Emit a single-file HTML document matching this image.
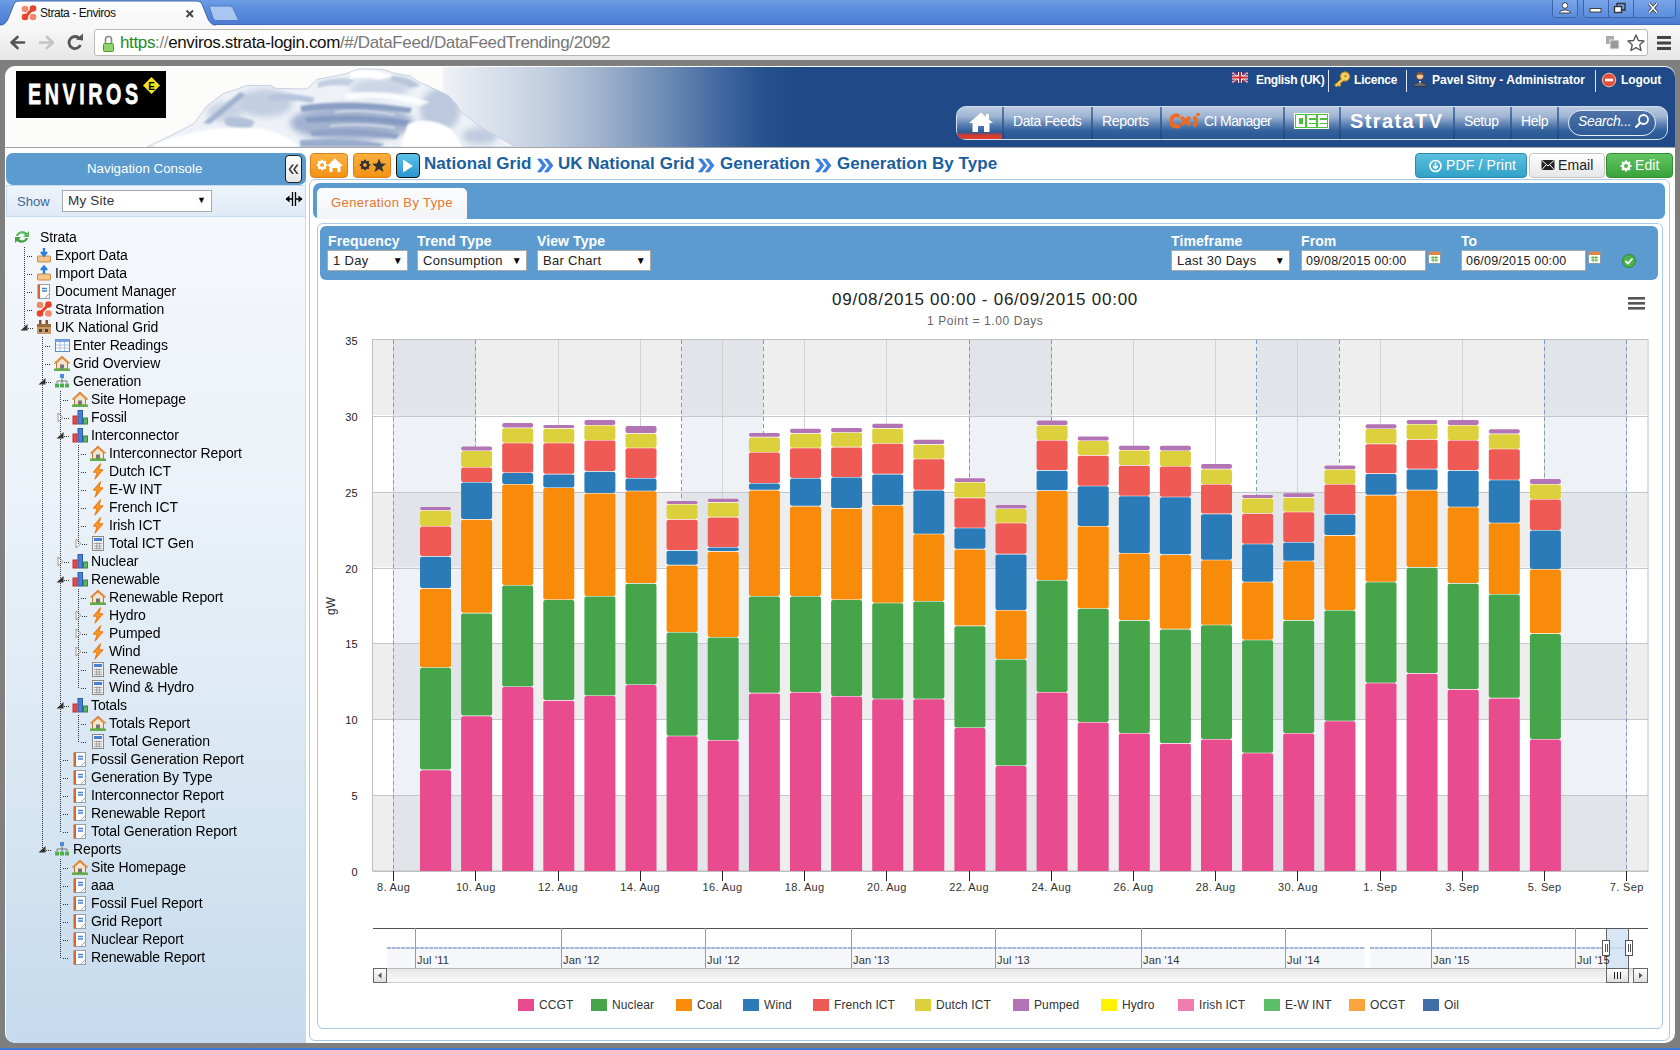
<!DOCTYPE html>
<html><head><meta charset="utf-8">
<style>
*{margin:0;padding:0;box-sizing:border-box}
html,body{width:1680px;height:1050px;overflow:hidden;background:#7f7f7f;font-family:"Liberation Sans",sans-serif;position:relative}
.a{position:absolute}
/* browser chrome */
#titlebar{left:0;top:0;width:1680px;height:25px;background:linear-gradient(#6b9ce4,#5a8bdc 50%,#4c7cd2);border-bottom:1px solid #3e6bbd}
#toolbar{left:0;top:25px;width:1680px;height:35px;background:linear-gradient(#f8f8f8,#eeeeee 60%,#e6e6e6)}
#omni{left:94px;top:29px;width:1554px;height:27px;background:#fff;border:1px solid #b9b9b9;border-radius:3px}
#url{left:120px;top:33px;font-size:17px;color:#111;white-space:nowrap;letter-spacing:-0.36px}
#page{left:5px;top:66px;width:1670px;height:977px;background:#fff;border-radius:10px}
#bluebot{left:0;top:1048px;width:1680px;height:2px;background:#3c78d8}
/* header */
#hdr{left:5px;top:67px;width:1670px;height:80px;background:linear-gradient(90deg,#fcfcfb 0px,#fcfcfb 437px,#eef1f6 439px,#dce3ed 480px,#c2cfe0 540px,#9cb0cb 600px,#6d8bb4 660px,#3f66a0 720px,#24508b 760px,#1f4a87 800px,#1f4a87 100%);border-radius:10px 10px 0 0}
#logo{left:16px;top:71px;width:150px;height:47px;background:#000}
.hl{position:absolute;top:72px;font-size:12px;font-weight:bold;color:#fff;white-space:nowrap}
.hsep{position:absolute;top:70px;width:1px;height:22px;background:#dfe7f3}
#menu{left:956px;top:106px;width:712px;height:34px;border:1px solid #d5e0ee;border-radius:10px;background:linear-gradient(#bccbe0 0%,#9eb4d2 30%,#5b80b3 55%,#31609b 75%,#2a5793 100%);overflow:hidden}
.mi{position:absolute;top:112px;height:20px;line-height:18px;font-size:14px;color:#fff;white-space:nowrap;letter-spacing:-0.4px}
.msep{position:absolute;top:107px;width:1px;height:32px;background:#3a5f93}
#hdrline{left:5px;top:147px;width:1670px;height:1px;background:#a4a4a4}
/* left nav */
#nav{left:6px;top:153px;width:300px;height:890px;background:linear-gradient(#f7f9fc 0%,#eaf1f8 40%,#d6e5f2 75%,#c5daed 100%);border-right:1px solid #cddcec;border-radius:6px 6px 0 10px}
#navh{left:6px;top:153px;width:300px;height:32px;background:#5b9bd0;border-radius:7px;color:#fff;font-size:13.3px;line-height:31px;padding-left:81px}
#navshow{left:6px;top:185px;width:300px;height:32px;background:linear-gradient(#eef4fb,#e0eaf6);border:1px solid #c7d9ee}
.t{position:absolute;font-size:14px;color:#000;white-space:nowrap;line-height:16px;letter-spacing:-0.12px}
/* main */
#main{left:309px;top:179px;width:1361px;height:862px;border:1px solid #a9cae6;border-radius:6px;background:#fff}
#tabs{left:313px;top:183px;width:1352px;height:36px;background:#5b9bcf;border-radius:7px 6px 6px 7px}
#tab{left:317px;top:188px;width:150px;height:31px;background:linear-gradient(#fbfcfd,#f2f4f7);border-radius:5px 5px 0 0}
#tabt{left:331px;top:195px;color:#e5752e;font-size:13px;letter-spacing:0.4px;white-space:nowrap}
#content{left:317px;top:223px;width:1346px;height:806px;border:1px solid #a9cae6;border-radius:6px}
#filt{left:320px;top:226px;width:1338px;height:54px;background:#5b9bcf;border-radius:6px}
.fl{position:absolute;font-size:14px;font-weight:bold;color:#fff;top:233px;white-space:nowrap;letter-spacing:0.1px}
.sel{position:absolute;top:250px;height:21px;background:#fff;border:1px solid #a9a9a9;font-size:13px;line-height:19px;padding-left:5px;color:#222;white-space:nowrap;overflow:hidden;letter-spacing:0.3px}
.sel b{position:absolute;right:4px;top:0;font-size:10px;color:#000}
.inp{position:absolute;top:250px;height:21px;background:#fff;border:1px solid #a9a9a9;font-size:12.5px;line-height:20px;padding-left:4px;color:#222;white-space:nowrap;letter-spacing:0.2px}
.btn{position:absolute;top:153px;height:25px;border-radius:3px;font-size:14px;line-height:23px;white-space:nowrap;text-align:center}
.xl{position:absolute;top:881px;width:80px;text-align:center;font-size:11px;color:#333;letter-spacing:0.35px}
.yl{position:absolute;left:322px;width:36px;text-align:right;font-size:11px;color:#222;letter-spacing:0.3px}
.lgs{position:absolute;top:999px;width:16px;height:12px}
.lgt{position:absolute;top:998px;font-size:12px;color:#333;white-space:nowrap;letter-spacing:0.1px}
.nvline{position:absolute;top:928px;width:1px;height:40px;background:#9a9a9a}
.nvl{position:absolute;top:954px;font-size:11px;color:#333;white-space:nowrap;letter-spacing:0.2px}
</style></head><body>
<div id="titlebar" class="a"></div>
<div id="toolbar" class="a"></div>
<div id="omni" class="a"></div>
<div id="url" class="a"><span style="color:#1e8b22">https</span><span style="color:#888">://</span>enviros.strata-login.com<span style="color:#777">/#/DataFeed/DataFeedTrending/2092</span></div>
<svg class="a" style="left:0;top:0" width="260" height="26">
<defs><linearGradient id="tabg" x1="0" y1="0" x2="0" y2="1"><stop offset="0" stop-color="#ffffff"/><stop offset="1" stop-color="#f6f6f6"/></linearGradient></defs>
<path d="M0,26 L0,25 C4,25 6,23 8,19 L14,4 C15,2 17,1 20,1 L196,1 C199,1 201,2 202,4 L208,19 C210,23 212,25 216,25 L260,25 L260,26 Z" fill="url(#tabg)" stroke="none"/><path d="M0,25 C4,25 6,23 8,19 L14,4 C15,2 17,1 20,1 L196,1 C199,1 201,2 202,4 L208,19 C210,23 212,25 216,25" fill="none" stroke="#3f68ad" stroke-width="1"/>
<path d="M209,6 L229,6 C231,6 232,7 233,8 L238,19 C238.5,20 238,20.5 237,20.5 L217,20.5 C215,20.5 214,20 213,18 Z" fill="#a9c6f2" stroke="#4d7bc9" stroke-width="1"/>
<g transform="translate(21,5)">
 <circle cx="4" cy="4" r="3.3" fill="#f0886a"/><circle cx="12" cy="3.5" r="3.3" fill="#e8452c"/><circle cx="4" cy="12" r="3.3" fill="#e8452c"/><circle cx="12" cy="12" r="3.3" fill="#f0886a"/>
 <path d="M4,12 L12,3.5" stroke="#e8452c" stroke-width="3"/>
</g>
<path d="M186.5,10.5 L193,17 M193,10.5 L186.5,17" stroke="#444" stroke-width="1.8"/>
</svg>
<div style="position:absolute;left:40px;top:6px;white-space:nowrap;font-size:12px;color:#111;letter-spacing:-0.45px">Strata - Enviros</div>
<svg class="a" style="left:1545px;top:0" width="135" height="20">
<defs><linearGradient id="wbg" x1="0" y1="0" x2="0" y2="1"><stop offset="0" stop-color="#7aa6ea"/><stop offset="1" stop-color="#5b8ddd"/></linearGradient></defs>
<path d="M7.5,-1 L7.5,14 C7.5,16 9,17.5 11,17.5 L29,17.5 C31,17.5 32.5,16 32.5,14 L32.5,-1" fill="url(#wbg)" stroke="#3d64a8"/>
<path d="M38.5,-1 L38.5,14 C38.5,16 40,17.5 42,17.5 L127,17.5 C129,17.5 130.5,16 130.5,14 L130.5,-1" fill="url(#wbg)" stroke="#3d64a8"/>
<line x1="63.5" y1="0" x2="63.5" y2="17" stroke="#3d64a8"/><line x1="88.5" y1="0" x2="88.5" y2="17" stroke="#3d64a8"/>
<circle cx="20" cy="5.5" r="2.8" fill="#fff" stroke="#333" stroke-width="0.9"/><path d="M14.5,13 C14.5,9 25.5,9 25.5,13 Z" fill="#fff" stroke="#333" stroke-width="0.9"/>
<rect x="45" y="8.5" width="11" height="3.5" fill="#fff" stroke="#333" stroke-width="0.9"/>
<rect x="69.5" y="6.5" width="7" height="6" fill="#fff" stroke="#333" stroke-width="1.4"/><path d="M72,6.5 V3.5 H80 V10 H76.5" fill="none" stroke="#333" stroke-width="1.4"/>
<path d="M104,3.5 L112,12.5 M112,3.5 L104,12.5" stroke="#333" stroke-width="3.2"/><path d="M104,3.5 L112,12.5 M112,3.5 L104,12.5" stroke="#fff" stroke-width="1.6"/>
</svg>
<svg class="a" style="left:0;top:24px" width="120" height="36">
<path d="M24,18.5 H13 M17.5,13 L11.5,18.5 L17.5,24" fill="none" stroke="#555" stroke-width="2.6" stroke-linecap="round" stroke-linejoin="round"/>
<path d="M40,18.5 H52 M47,13 L53,18.5 L47,24" fill="none" stroke="#c4c4c4" stroke-width="2.6" stroke-linecap="round" stroke-linejoin="round"/>
<path d="M80.5,21 A6,6 0 1 1 79.5,14.5" fill="none" stroke="#555" stroke-width="2.8"/>
<path d="M76,15.5 L83,9.5 L83,16.5 Z" fill="#555"/>
<rect x="103.5" y="19.5" width="10" height="8" fill="#8fd46b" stroke="#4d9a2e" rx="1"/>
<path d="M105.5,19.5 V15.5 A3,3 0 0 1 111.5,15.5 V19.5" fill="none" stroke="#888" stroke-width="1.6"/>
</svg>
<svg class="a" style="left:1600px;top:30px" width="80" height="26">
<rect x="6" y="6" width="8" height="8" fill="#aaa"/><rect x="10" y="10" width="9" height="9" fill="#999" stroke="#eee"/>
<path d="M36,5 L38.4,10.5 L44,11 L39.8,14.8 L41,20.5 L36,17.6 L31,20.5 L32.2,14.8 L28,11 L33.6,10.5 Z" fill="none" stroke="#555" stroke-width="1.4" stroke-linejoin="round"/>
<rect x="57" y="6" width="14" height="3" fill="#444"/><rect x="57" y="11.5" width="14" height="3" fill="#444"/><rect x="57" y="17" width="14" height="3" fill="#444"/>
</svg>

<div id="page" class="a"></div>
<div id="bluebot" class="a"></div>
<div id="hdr" class="a"></div>
<svg class="a" style="left:0;top:0" width="560" height="148">
<defs>
<filter id="bl"><feGaussianBlur stdDeviation="1.1"/></filter>
<filter id="bl2"><feGaussianBlur stdDeviation="0.6"/></filter>
<filter id="bl3"><feGaussianBlur stdDeviation="3"/></filter>
<clipPath id="mclip"><path d="M147,147 L170,136 L194,123.5 L207,105.7 L223,93.8 L240,88 L247,85.4 L270,85.4 L276,88.4 L307,89 L317,79.5 L345,74 L359,68.8 L383,69.4 L395,73.5 L410,76 L419,82 L440,91.4 L449,96 L455,103 L461,111.6 L479,126 L516,147 Z"/></clipPath>
</defs>
<path d="M147,147 L170,136 L194,123.5 L207,105.7 L223,93.8 L240,88 L247,85.4 L270,85.4 L276,88.4 L307,89 L317,79.5 L345,74 L359,68.8 L383,69.4 L395,73.5 L410,76 L419,82 L440,91.4 L449,96 L455,103 L461,111.6 L479,126 L516,147 Z" fill="#eef2f8" stroke="#c6d0e1" stroke-width="1" filter="url(#bl2)"/>
<g clip-path="url(#mclip)">
<g filter="url(#bl3)">
<ellipse cx="352" cy="123" rx="62" ry="18" fill="#a2b2cf"/>
<ellipse cx="265" cy="103" rx="28" ry="14" fill="#c3cee1"/>
<ellipse cx="440" cy="110" rx="20" ry="22" fill="#bcc8dd"/>
<ellipse cx="380" cy="88" rx="30" ry="10" fill="#ccd6e6"/>
<ellipse cx="225" cy="112" rx="18" ry="10" fill="#c9d3e4"/>
<ellipse cx="480" cy="136" rx="18" ry="9" fill="#c0cce0"/>
</g>
<g filter="url(#bl)">
<path d="M300,106 C330,101 370,102 412,108 L410,113 C370,108 330,108 302,112 Z" fill="#8a9ec3"/>
<path d="M305,118 C340,114 380,116 410,121 L406,126 C375,121 340,120 308,123 Z" fill="#8599c0"/>
<path d="M310,131 C340,128 370,129 400,134 L396,139 C370,135 340,134 312,136 Z" fill="#8fa2c6"/>
<path d="M300,140 C330,138 360,139 385,144 L380,147 L300,147 Z" fill="#9badcd"/>
<path d="M203,123 L240,92 L246,95 L210,124 Z" fill="#a2b3d0"/>
<path d="M225,118 C235,116 248,117 255,122 L250,129 C240,129 230,128 225,124 Z" fill="#b3c1d9"/>
<path d="M268,96 C280,92 300,94 315,98 L312,103 C298,100 282,100 270,101 Z" fill="#b7c4db"/>
<path d="M392,76 C405,76 415,80 420,86 L410,88 C402,84 396,82 390,81 Z" fill="#b9c6dc"/>
<path d="M318,82 C330,78 345,77 355,80 L348,86 C338,84 326,85 318,88 Z" fill="#c3cee1"/>
</g>
<g filter="url(#bl)" fill="#ffffff">
<path d="M335,112 C355,110 375,111 395,115" fill="none" stroke="#e6ebf3" stroke-width="1.5"/>
<path d="M330,126 C350,124 375,125 395,128" fill="none" stroke="#e6ebf3" stroke-width="1.5"/>
<path d="M408,124 C420,118 440,120 452,130 L462,147 L400,147 Z"/>
<path d="M150,147 C180,132 215,126 255,128 C275,130 290,138 300,147 Z" opacity="0.95"/>
<path d="M350,72 C365,69 380,70 392,76 L378,80 C368,77 358,77 350,79 Z"/>
<path d="M345,94 C370,90 400,92 430,102 L420,106 C400,99 375,97 348,99 Z" opacity="0.85"/>
</g>
</g>
</svg>
<div id="logo" class="a"></div>
<div class="a" style="left:28px;top:77px;font-size:30px;font-weight:bold;color:#fff;letter-spacing:5.5px;transform:scaleX(0.655);transform-origin:0 0;white-space:nowrap;line-height:34px;-webkit-text-stroke:0.8px #fff">ENVIROS</div>
<svg class="a" style="left:142px;top:76px" width="19" height="19"><path d="M9.5,1 L18,9.5 L9.5,18 L1,9.5 Z" fill="#f2e21c"/><text x="9.5" y="13.5" font-size="10" font-weight="bold" text-anchor="middle" font-family="Liberation Sans" fill="#000">E</text></svg>
<div id="hdrline" class="a"></div>
<svg class="a" style="left:1232px;top:72px" width="17" height="13"><rect x="0" y="0" width="16" height="11" fill="#fff"/><path d="M1,0 L6,3.5 L6,0 Z M10,0 L10,3.5 L15,0 Z M1,11 L6,7.5 L6,11 Z M10,11 L10,7.5 L15,11 Z M0,1.5 L4,3.5 L0,3.5 Z M16,1.5 L12,3.5 L16,3.5 Z M0,9.5 L4,7.5 L0,7.5 Z M16,9.5 L12,7.5 L16,7.5 Z" fill="#2b3f8e"/><path d="M0,0 L5,3.5 M16,0 L11,3.5 M0,11 L5,7.5 M16,11 L11,7.5" stroke="#d8232a" stroke-width="0.9"/><path d="M8,0 V11 M0,5.5 H16" stroke="#d8232a" stroke-width="2"/></svg>
<div style="position:absolute;left:1256px;top:73px;white-space:nowrap;font-size:12px;font-weight:bold;color:#fff;letter-spacing:-0.3px">English (UK)</div>
<div style="position:absolute;left:1328px;top:70px;width:1px;height:22px;background:#dfe7f3"></div>
<svg class="a" style="left:1333px;top:71px" width="18" height="17"><circle cx="12" cy="5.5" r="4.6" fill="#f3d060" stroke="#c08a20" stroke-width="1"/><path d="M9,7.5 L1.5,14 L3.5,16 L5,14.5 L6.5,15.5 L8,14 L7,12.5 L11.5,9" fill="#f3d060" stroke="#c08a20" stroke-width="1" stroke-linejoin="round"/><circle cx="12.5" cy="5" r="1.2" fill="#c08a20"/></svg>
<div style="position:absolute;left:1354px;top:73px;white-space:nowrap;font-size:12px;font-weight:bold;color:#fff;letter-spacing:-0.2px">Licence</div>
<div style="position:absolute;left:1406px;top:70px;width:1px;height:22px;background:#dfe7f3"></div>
<svg class="a" style="left:1412px;top:71px" width="16" height="16"><circle cx="8" cy="5" r="3.6" fill="#f3c9a0" stroke="#7a4a20" stroke-width="0.8"/><path d="M4.3,4.5 C4.5,1 11.5,1 11.7,4.5 C10,3 6,3 4.3,4.5 Z" fill="#6a3d18"/><path d="M1.5,15.5 C1.5,10 14.5,10 14.5,15.5 Z" fill="#606570" stroke="#333" stroke-width="0.8"/><path d="M7,10 L8,13 L9,10" fill="#fff"/></svg>
<div style="position:absolute;left:1432px;top:73px;white-space:nowrap;font-size:12px;font-weight:bold;color:#fff">Pavel Sitny - Administrator</div>
<div style="position:absolute;left:1595px;top:70px;width:1px;height:22px;background:#dfe7f3"></div>
<svg class="a" style="left:1601px;top:72px" width="16" height="16"><circle cx="8" cy="8" r="6.8" fill="#e4503a" stroke="#f6c8c0" stroke-width="0.9"/><rect x="4" y="6.7" width="8" height="2.6" fill="#fff"/></svg>
<div style="position:absolute;left:1621px;top:73px;white-space:nowrap;font-size:12px;font-weight:bold;color:#fff;letter-spacing:-0.1px">Logout</div>
<div id="menu" class="a"></div>
<div style="position:absolute;left:957px;top:132px;width:45px;height:7px;background:linear-gradient(#2b5a95,#d63a2c 50%,#e0412f);border-radius:0 0 0 9px"></div>
<svg class="a" style="left:968px;top:111px" width="28" height="22"><path d="M13,1.5 L25,12 L21.5,12 L21.5,21 L16,21 L16,15 L10,15 L10,21 L4.5,21 L4.5,12 L1,12 Z" fill="#fff"/><rect x="18" y="3" width="3" height="5" fill="#fff"/></svg>
<div style="position:absolute;left:1002px;top:107px;width:2px;height:32px;background:linear-gradient(#5d7fac,#1c4682)"></div>
<div style="position:absolute;left:1091px;top:107px;width:2px;height:32px;background:linear-gradient(#5d7fac,#1c4682)"></div>
<div style="position:absolute;left:1160px;top:107px;width:2px;height:32px;background:linear-gradient(#5d7fac,#1c4682)"></div>
<div style="position:absolute;left:1283px;top:107px;width:2px;height:32px;background:linear-gradient(#5d7fac,#1c4682)"></div>
<div style="position:absolute;left:1339px;top:107px;width:2px;height:32px;background:linear-gradient(#5d7fac,#1c4682)"></div>
<div style="position:absolute;left:1453px;top:107px;width:2px;height:32px;background:linear-gradient(#5d7fac,#1c4682)"></div>
<div style="position:absolute;left:1510px;top:107px;width:2px;height:32px;background:linear-gradient(#5d7fac,#1c4682)"></div>
<div style="position:absolute;left:1557px;top:107px;width:2px;height:32px;background:linear-gradient(#5d7fac,#1c4682)"></div>
<div style="position:absolute;left:1013px;top:113px;white-space:nowrap;font-size:14px;color:#fff;letter-spacing:-0.4px">Data Feeds</div>
<div style="position:absolute;left:1102px;top:113px;white-space:nowrap;font-size:14px;color:#fff;letter-spacing:-0.35px">Reports</div>
<svg class="a" style="left:1170px;top:112px" width="31" height="18"><path d="M9.5,4.5 A5.5,5.5 0 1 0 9.5,13.5" fill="none" stroke="#f06a1e" stroke-width="4"/><path d="M11,5 L20,13 M20,5 L11,13" stroke="#f06a1e" stroke-width="3.5"/><path d="M23.5,5 A5,5 0 0 1 23.5,14" fill="none" stroke="#f06a1e" stroke-width="3.5"/><circle cx="28" cy="2.5" r="1.8" fill="#f06a1e"/></svg>
<div style="position:absolute;left:1204px;top:113px;white-space:nowrap;font-size:14px;color:#fff;letter-spacing:-0.6px">CI Manager</div>
<svg class="a" style="left:1294px;top:113px" width="36" height="17" shape-rendering="crispEdges"><rect x="0" y="0" width="35" height="16" fill="#f4fbf2"/><rect x="1" y="1" width="33" height="14" fill="#4cc03a"/><rect x="2" y="2" width="9" height="12" fill="#fff"/><rect x="5" y="5" width="4" height="6" fill="#4cc03a"/><rect x="13" y="2" width="9" height="12" fill="#fff"/><rect x="15" y="5" width="7" height="1.5" fill="#4cc03a"/><rect x="15" y="9.5" width="7" height="1.5" fill="#4cc03a"/><rect x="24" y="2" width="9" height="12" fill="#fff"/><rect x="26" y="5" width="7" height="1.5" fill="#4cc03a"/><rect x="26" y="9.5" width="7" height="1.5" fill="#4cc03a"/></svg>
<div style="position:absolute;left:1350px;top:110px;white-space:nowrap;font-size:20px;font-weight:bold;color:#fff;letter-spacing:1.4px">StrataTV</div>
<div style="position:absolute;left:1464px;top:113px;white-space:nowrap;font-size:14px;color:#fff;letter-spacing:-0.4px">Setup</div>
<div style="position:absolute;left:1521px;top:113px;white-space:nowrap;font-size:14px;color:#fff;letter-spacing:-0.4px">Help</div>
<div style="position:absolute;left:1568px;top:110px;width:88px;height:26px;border:1.5px solid #e6edf6;border-radius:13px;background:linear-gradient(#4d72a8,#2d5b97)"></div>
<div style="position:absolute;left:1578px;top:113px;white-space:nowrap;font-size:14px;font-style:italic;color:#fff;letter-spacing:-0.3px">Search...</div>
<svg class="a" style="left:1634px;top:113px" width="16" height="18"><circle cx="9.5" cy="6.5" r="4.5" fill="none" stroke="#fff" stroke-width="1.8"/><path d="M6.2,9.8 L1.5,14.5" stroke="#fff" stroke-width="2.2"/></svg>

<div id="nav" class="a"></div>
<div id="navh" class="a">Navigation Console</div>
<div id="navshow" class="a"></div>
<div style="position:absolute;left:285px;top:155px;width:17px;height:28px;background:linear-gradient(#ffffff,#e6e6e6);border:1.5px solid #222;border-radius:4px"></div>
<div style="position:absolute;left:288px;top:158px;white-space:nowrap;font-size:20px;color:#333;line-height:20px;transform:scaleY(1.15)">&laquo;</div>
<div style="position:absolute;left:17px;top:194px;white-space:nowrap;font-size:13px;color:#3a6a98">Show</div>
<div style="position:absolute;left:62px;top:190px;width:150px;height:22px;background:#fff;border:1px solid #a8a8a8"></div>
<div style="position:absolute;left:68px;top:193px;white-space:nowrap;font-size:13.5px;color:#333;letter-spacing:0.2px">My Site</div>
<div style="position:absolute;left:197px;top:195px;white-space:nowrap;font-size:9px;color:#000">&#9660;</div>
<svg class="a" style="left:285px;top:191px" width="18" height="16"><path d="M7.5,1 V15 M10.5,1 V15" stroke="#000" stroke-width="1.3"/><path d="M1,8 H7 M11,8 H17" stroke="#000" stroke-width="1.3"/><path d="M0.5,8 L4.5,4.5 L4.5,11.5 Z M17.5,8 L13.5,4.5 L13.5,11.5 Z" fill="#000"/></svg>
<svg class="a" style="left:0;top:0" width="310" height="1050">
<g transform="translate(14,229.0)"><path d="M2,7 C3,2 10,1 13,4 L15,2 L15,8 L9,8 L11,6 C9,4 5,4 4.5,7 Z" fill="#5cb85c"/><path d="M14,9 C13,14 6,15 3,12 L1,14 L1,8 L7,8 L5,10 C7,12 11,12 11.5,9 Z" fill="#46a046"/></g>
<g transform="translate(36,247.0)"><rect x="1.5" y="9" width="13" height="6" rx="1" fill="#f5c58a" stroke="#c98a45"/><path d="M8,1 V8 M5,5 L8,8.5 L11,5" stroke="#2d7fd8" stroke-width="2.4" fill="none"/></g>
<line x1="27.0" y1="256.5" x2="32.5" y2="256.5" stroke="#333" stroke-width="1" stroke-dasharray="1,1" shape-rendering="crispEdges"/>
<g transform="translate(36,265.0)"><rect x="1.5" y="9" width="13" height="6" rx="1" fill="#f5c58a" stroke="#c98a45"/><path d="M8,9 V2 M5,5 L8,1.5 L11,5" stroke="#2d7fd8" stroke-width="2.4" fill="none"/></g>
<line x1="27.0" y1="274.5" x2="32.5" y2="274.5" stroke="#333" stroke-width="1" stroke-dasharray="1,1" shape-rendering="crispEdges"/>
<g transform="translate(36,283.0)"><rect x="2.5" y="1.5" width="11" height="14" fill="#fff" stroke="#9aa0a8"/><rect x="1.5" y="1.5" width="2.5" height="14" fill="#d8662c"/><path d="M6,5.5 H11 M6,8 H11" stroke="#4a7fd6" stroke-width="1.3"/><path d="M9,15 L13,11" stroke="#aaa"/></g>
<line x1="27.0" y1="292.5" x2="32.5" y2="292.5" stroke="#333" stroke-width="1" stroke-dasharray="1,1" shape-rendering="crispEdges"/>
<g transform="translate(36,301.0)"><circle cx="4" cy="4" r="3.3" fill="#f08a6a"/><circle cx="12.5" cy="3.5" r="3.3" fill="#e8452c"/><circle cx="4" cy="12.5" r="3.3" fill="#e8452c"/><circle cx="12.5" cy="12.5" r="3.3" fill="#f08a6a"/><path d="M4,12.5 L12.5,3.5" stroke="#e8452c" stroke-width="3"/></g>
<line x1="27.0" y1="310.5" x2="32.5" y2="310.5" stroke="#333" stroke-width="1" stroke-dasharray="1,1" shape-rendering="crispEdges"/>
<g transform="translate(36,319.0)"><rect x="3" y="1" width="2.5" height="5" fill="#7a5030"/><rect x="9.5" y="1" width="2.5" height="5" fill="#7a5030"/><rect x="1" y="5" width="14" height="3" fill="#9a6a3a"/><rect x="1" y="8" width="14" height="7" fill="#c89a6a"/><rect x="3" y="10" width="3" height="3" fill="#444"/><rect x="9" y="10" width="3" height="3" fill="#444"/></g>
<line x1="28.0" y1="328.5" x2="32.5" y2="328.5" stroke="#333" stroke-width="1" stroke-dasharray="1,1" shape-rendering="crispEdges"/>
<path d="M27.5,324.0 L27.5,330.5 L20.5,330.5 Z" fill="#333"/>
<g transform="translate(54,337.0)"><rect x="1.5" y="2.5" width="14" height="12" fill="#fff" stroke="#5a8ad0"/><rect x="1.5" y="2.5" width="14" height="2.5" fill="#7aa5e0"/><path d="M2,8 H15 M2,11 H15 M6,5 V14 M10.5,5 V14" stroke="#9ab8e0" stroke-width="0.8"/></g>
<line x1="45.0" y1="346.5" x2="50.5" y2="346.5" stroke="#333" stroke-width="1" stroke-dasharray="1,1" shape-rendering="crispEdges"/>
<g transform="translate(54,355.0)"><path d="M8,1 L15.5,8 L13.5,8 L13.5,14 L2.5,14 L2.5,8 L0.5,8 Z" fill="#f3e6d0" stroke="#c0773a"/><path d="M8,1 L15.5,8 L13,8 L8,3.5 L3,8 L0.5,8 Z" fill="#e88a3a"/><rect x="6" y="9.5" width="4" height="4.5" fill="#777"/><rect x="0" y="13.5" width="16" height="2.5" fill="#5fb04a"/></g>
<line x1="45.0" y1="364.5" x2="50.5" y2="364.5" stroke="#333" stroke-width="1" stroke-dasharray="1,1" shape-rendering="crispEdges"/>
<g transform="translate(54,373.0)"><rect x="6" y="1" width="4" height="4" fill="#4a8ad8"/><path d="M8,5 V8 M3,8 H13 M3,8 V10 M8,8 V10 M13,8 V10" stroke="#666" stroke-width="0.9"/><rect x="1" y="10.5" width="4" height="4" fill="#4cae4c"/><rect x="6" y="10.5" width="4" height="4" fill="#4cae4c"/><rect x="11" y="10.5" width="4" height="4" fill="#4cae4c"/></g>
<line x1="46.0" y1="382.5" x2="50.5" y2="382.5" stroke="#333" stroke-width="1" stroke-dasharray="1,1" shape-rendering="crispEdges"/>
<path d="M45.5,378.0 L45.5,384.5 L38.5,384.5 Z" fill="#333"/>
<g transform="translate(72,391.0)"><path d="M8,1 L15.5,8 L13.5,8 L13.5,14 L2.5,14 L2.5,8 L0.5,8 Z" fill="#f3e6d0" stroke="#c0773a"/><path d="M8,1 L15.5,8 L13,8 L8,3.5 L3,8 L0.5,8 Z" fill="#e88a3a"/><rect x="6" y="9.5" width="4" height="4.5" fill="#777"/><rect x="0" y="13.5" width="16" height="2.5" fill="#5fb04a"/></g>
<line x1="63.0" y1="400.5" x2="68.5" y2="400.5" stroke="#333" stroke-width="1" stroke-dasharray="1,1" shape-rendering="crispEdges"/>
<g transform="translate(72,409.0)"><rect x="1" y="7" width="4" height="8" fill="#e84a4a" stroke="#b33"/><rect x="6" y="1.5" width="4.5" height="13.5" fill="#4a7fd8" stroke="#2c5fa8"/><rect x="11.5" y="9" width="4" height="6" fill="#5cb85c" stroke="#3a8a3a"/></g>
<line x1="64.0" y1="418.5" x2="68.5" y2="418.5" stroke="#333" stroke-width="1" stroke-dasharray="1,1" shape-rendering="crispEdges"/>
<path d="M58.0,413.0 L63.0,417.5 L58.0,422.0 Z" fill="#fdfdfd" stroke="#9a9a9a" stroke-width="1"/>
<g transform="translate(72,427.0)"><rect x="1" y="7" width="4" height="8" fill="#e84a4a" stroke="#b33"/><rect x="6" y="1.5" width="4.5" height="13.5" fill="#4a7fd8" stroke="#2c5fa8"/><rect x="11.5" y="9" width="4" height="6" fill="#5cb85c" stroke="#3a8a3a"/></g>
<line x1="64.0" y1="436.5" x2="68.5" y2="436.5" stroke="#333" stroke-width="1" stroke-dasharray="1,1" shape-rendering="crispEdges"/>
<path d="M63.5,432.0 L63.5,438.5 L56.5,438.5 Z" fill="#333"/>
<g transform="translate(90,445.0)"><path d="M8,1 L15.5,8 L13.5,8 L13.5,14 L2.5,14 L2.5,8 L0.5,8 Z" fill="#f3e6d0" stroke="#c0773a"/><path d="M8,1 L15.5,8 L13,8 L8,3.5 L3,8 L0.5,8 Z" fill="#e88a3a"/><rect x="6" y="9.5" width="4" height="4.5" fill="#777"/><rect x="0" y="13.5" width="16" height="2.5" fill="#5fb04a"/></g>
<line x1="81.0" y1="454.5" x2="86.5" y2="454.5" stroke="#333" stroke-width="1" stroke-dasharray="1,1" shape-rendering="crispEdges"/>
<g transform="translate(90,463.0)"><path d="M10.5,0.8 L3.5,9.2 L7.3,9.2 L5,16 L12.8,6.8 L8.8,6.8 Z" fill="#f99a2a" stroke="#f07c14" stroke-width="1.1" stroke-linejoin="round"/></g>
<line x1="81.0" y1="472.5" x2="86.5" y2="472.5" stroke="#333" stroke-width="1" stroke-dasharray="1,1" shape-rendering="crispEdges"/>
<g transform="translate(90,481.0)"><path d="M10.5,0.8 L3.5,9.2 L7.3,9.2 L5,16 L12.8,6.8 L8.8,6.8 Z" fill="#f99a2a" stroke="#f07c14" stroke-width="1.1" stroke-linejoin="round"/></g>
<line x1="81.0" y1="490.5" x2="86.5" y2="490.5" stroke="#333" stroke-width="1" stroke-dasharray="1,1" shape-rendering="crispEdges"/>
<g transform="translate(90,499.0)"><path d="M10.5,0.8 L3.5,9.2 L7.3,9.2 L5,16 L12.8,6.8 L8.8,6.8 Z" fill="#f99a2a" stroke="#f07c14" stroke-width="1.1" stroke-linejoin="round"/></g>
<line x1="81.0" y1="508.5" x2="86.5" y2="508.5" stroke="#333" stroke-width="1" stroke-dasharray="1,1" shape-rendering="crispEdges"/>
<g transform="translate(90,517.0)"><path d="M10.5,0.8 L3.5,9.2 L7.3,9.2 L5,16 L12.8,6.8 L8.8,6.8 Z" fill="#f99a2a" stroke="#f07c14" stroke-width="1.1" stroke-linejoin="round"/></g>
<line x1="81.0" y1="526.5" x2="86.5" y2="526.5" stroke="#333" stroke-width="1" stroke-dasharray="1,1" shape-rendering="crispEdges"/>
<g transform="translate(90,535.0)"><rect x="2.5" y="1.5" width="11" height="14" fill="#f2f2f2" stroke="#888"/><rect x="4" y="3" width="8" height="3" fill="#4a7fd6"/><path d="M4,8.5 H12 M4,11 H12 M4,13.5 H12 M6.7,7.5 V14.5 M9.3,7.5 V14.5" stroke="#999" stroke-width="0.9"/></g>
<line x1="82.0" y1="544.5" x2="86.5" y2="544.5" stroke="#333" stroke-width="1" stroke-dasharray="1,1" shape-rendering="crispEdges"/>
<path d="M76.0,539.0 L81.0,543.5 L76.0,548.0 Z" fill="#fdfdfd" stroke="#9a9a9a" stroke-width="1"/>
<g transform="translate(72,553.0)"><rect x="1" y="7" width="4" height="8" fill="#e84a4a" stroke="#b33"/><rect x="6" y="1.5" width="4.5" height="13.5" fill="#4a7fd8" stroke="#2c5fa8"/><rect x="11.5" y="9" width="4" height="6" fill="#5cb85c" stroke="#3a8a3a"/></g>
<line x1="64.0" y1="562.5" x2="68.5" y2="562.5" stroke="#333" stroke-width="1" stroke-dasharray="1,1" shape-rendering="crispEdges"/>
<path d="M58.0,557.0 L63.0,561.5 L58.0,566.0 Z" fill="#fdfdfd" stroke="#9a9a9a" stroke-width="1"/>
<g transform="translate(72,571.0)"><rect x="1" y="7" width="4" height="8" fill="#e84a4a" stroke="#b33"/><rect x="6" y="1.5" width="4.5" height="13.5" fill="#4a7fd8" stroke="#2c5fa8"/><rect x="11.5" y="9" width="4" height="6" fill="#5cb85c" stroke="#3a8a3a"/></g>
<line x1="64.0" y1="580.5" x2="68.5" y2="580.5" stroke="#333" stroke-width="1" stroke-dasharray="1,1" shape-rendering="crispEdges"/>
<path d="M63.5,576.0 L63.5,582.5 L56.5,582.5 Z" fill="#333"/>
<g transform="translate(90,589.0)"><path d="M8,1 L15.5,8 L13.5,8 L13.5,14 L2.5,14 L2.5,8 L0.5,8 Z" fill="#f3e6d0" stroke="#c0773a"/><path d="M8,1 L15.5,8 L13,8 L8,3.5 L3,8 L0.5,8 Z" fill="#e88a3a"/><rect x="6" y="9.5" width="4" height="4.5" fill="#777"/><rect x="0" y="13.5" width="16" height="2.5" fill="#5fb04a"/></g>
<line x1="81.0" y1="598.5" x2="86.5" y2="598.5" stroke="#333" stroke-width="1" stroke-dasharray="1,1" shape-rendering="crispEdges"/>
<g transform="translate(90,607.0)"><path d="M10.5,0.8 L3.5,9.2 L7.3,9.2 L5,16 L12.8,6.8 L8.8,6.8 Z" fill="#f99a2a" stroke="#f07c14" stroke-width="1.1" stroke-linejoin="round"/></g>
<line x1="82.0" y1="616.5" x2="86.5" y2="616.5" stroke="#333" stroke-width="1" stroke-dasharray="1,1" shape-rendering="crispEdges"/>
<path d="M76.0,611.0 L81.0,615.5 L76.0,620.0 Z" fill="#fdfdfd" stroke="#9a9a9a" stroke-width="1"/>
<g transform="translate(90,625.0)"><path d="M10.5,0.8 L3.5,9.2 L7.3,9.2 L5,16 L12.8,6.8 L8.8,6.8 Z" fill="#f99a2a" stroke="#f07c14" stroke-width="1.1" stroke-linejoin="round"/></g>
<line x1="82.0" y1="634.5" x2="86.5" y2="634.5" stroke="#333" stroke-width="1" stroke-dasharray="1,1" shape-rendering="crispEdges"/>
<path d="M76.0,629.0 L81.0,633.5 L76.0,638.0 Z" fill="#fdfdfd" stroke="#9a9a9a" stroke-width="1"/>
<g transform="translate(90,643.0)"><path d="M10.5,0.8 L3.5,9.2 L7.3,9.2 L5,16 L12.8,6.8 L8.8,6.8 Z" fill="#f99a2a" stroke="#f07c14" stroke-width="1.1" stroke-linejoin="round"/></g>
<line x1="82.0" y1="652.5" x2="86.5" y2="652.5" stroke="#333" stroke-width="1" stroke-dasharray="1,1" shape-rendering="crispEdges"/>
<path d="M76.0,647.0 L81.0,651.5 L76.0,656.0 Z" fill="#fdfdfd" stroke="#9a9a9a" stroke-width="1"/>
<g transform="translate(90,661.0)"><rect x="2.5" y="1.5" width="11" height="14" fill="#f2f2f2" stroke="#888"/><rect x="4" y="3" width="8" height="3" fill="#4a7fd6"/><path d="M4,8.5 H12 M4,11 H12 M4,13.5 H12 M6.7,7.5 V14.5 M9.3,7.5 V14.5" stroke="#999" stroke-width="0.9"/></g>
<line x1="81.0" y1="670.5" x2="86.5" y2="670.5" stroke="#333" stroke-width="1" stroke-dasharray="1,1" shape-rendering="crispEdges"/>
<g transform="translate(90,679.0)"><rect x="2.5" y="1.5" width="11" height="14" fill="#f2f2f2" stroke="#888"/><rect x="4" y="3" width="8" height="3" fill="#4a7fd6"/><path d="M4,8.5 H12 M4,11 H12 M4,13.5 H12 M6.7,7.5 V14.5 M9.3,7.5 V14.5" stroke="#999" stroke-width="0.9"/></g>
<line x1="81.0" y1="688.5" x2="86.5" y2="688.5" stroke="#333" stroke-width="1" stroke-dasharray="1,1" shape-rendering="crispEdges"/>
<g transform="translate(72,697.0)"><rect x="1" y="7" width="4" height="8" fill="#e84a4a" stroke="#b33"/><rect x="6" y="1.5" width="4.5" height="13.5" fill="#4a7fd8" stroke="#2c5fa8"/><rect x="11.5" y="9" width="4" height="6" fill="#5cb85c" stroke="#3a8a3a"/></g>
<line x1="64.0" y1="706.5" x2="68.5" y2="706.5" stroke="#333" stroke-width="1" stroke-dasharray="1,1" shape-rendering="crispEdges"/>
<path d="M63.5,702.0 L63.5,708.5 L56.5,708.5 Z" fill="#333"/>
<g transform="translate(90,715.0)"><path d="M8,1 L15.5,8 L13.5,8 L13.5,14 L2.5,14 L2.5,8 L0.5,8 Z" fill="#f3e6d0" stroke="#c0773a"/><path d="M8,1 L15.5,8 L13,8 L8,3.5 L3,8 L0.5,8 Z" fill="#e88a3a"/><rect x="6" y="9.5" width="4" height="4.5" fill="#777"/><rect x="0" y="13.5" width="16" height="2.5" fill="#5fb04a"/></g>
<line x1="81.0" y1="724.5" x2="86.5" y2="724.5" stroke="#333" stroke-width="1" stroke-dasharray="1,1" shape-rendering="crispEdges"/>
<g transform="translate(90,733.0)"><rect x="2.5" y="1.5" width="11" height="14" fill="#f2f2f2" stroke="#888"/><rect x="4" y="3" width="8" height="3" fill="#4a7fd6"/><path d="M4,8.5 H12 M4,11 H12 M4,13.5 H12 M6.7,7.5 V14.5 M9.3,7.5 V14.5" stroke="#999" stroke-width="0.9"/></g>
<line x1="81.0" y1="742.5" x2="86.5" y2="742.5" stroke="#333" stroke-width="1" stroke-dasharray="1,1" shape-rendering="crispEdges"/>
<g transform="translate(72,751.0)"><rect x="2.5" y="1.5" width="11" height="14" fill="#fff" stroke="#9aa0a8"/><rect x="1.5" y="1.5" width="2.5" height="14" fill="#d8662c"/><path d="M6,5.5 H11 M6,8 H11" stroke="#4a7fd6" stroke-width="1.3"/><path d="M9,15 L13,11" stroke="#aaa"/></g>
<line x1="63.0" y1="760.5" x2="68.5" y2="760.5" stroke="#333" stroke-width="1" stroke-dasharray="1,1" shape-rendering="crispEdges"/>
<g transform="translate(72,769.0)"><rect x="2.5" y="1.5" width="11" height="14" fill="#fff" stroke="#9aa0a8"/><rect x="1.5" y="1.5" width="2.5" height="14" fill="#d8662c"/><path d="M6,5.5 H11 M6,8 H11" stroke="#4a7fd6" stroke-width="1.3"/><path d="M9,15 L13,11" stroke="#aaa"/></g>
<line x1="63.0" y1="778.5" x2="68.5" y2="778.5" stroke="#333" stroke-width="1" stroke-dasharray="1,1" shape-rendering="crispEdges"/>
<g transform="translate(72,787.0)"><rect x="2.5" y="1.5" width="11" height="14" fill="#fff" stroke="#9aa0a8"/><rect x="1.5" y="1.5" width="2.5" height="14" fill="#d8662c"/><path d="M6,5.5 H11 M6,8 H11" stroke="#4a7fd6" stroke-width="1.3"/><path d="M9,15 L13,11" stroke="#aaa"/></g>
<line x1="63.0" y1="796.5" x2="68.5" y2="796.5" stroke="#333" stroke-width="1" stroke-dasharray="1,1" shape-rendering="crispEdges"/>
<g transform="translate(72,805.0)"><rect x="2.5" y="1.5" width="11" height="14" fill="#fff" stroke="#9aa0a8"/><rect x="1.5" y="1.5" width="2.5" height="14" fill="#d8662c"/><path d="M6,5.5 H11 M6,8 H11" stroke="#4a7fd6" stroke-width="1.3"/><path d="M9,15 L13,11" stroke="#aaa"/></g>
<line x1="63.0" y1="814.5" x2="68.5" y2="814.5" stroke="#333" stroke-width="1" stroke-dasharray="1,1" shape-rendering="crispEdges"/>
<g transform="translate(72,823.0)"><rect x="2.5" y="1.5" width="11" height="14" fill="#fff" stroke="#9aa0a8"/><rect x="1.5" y="1.5" width="2.5" height="14" fill="#d8662c"/><path d="M6,5.5 H11 M6,8 H11" stroke="#4a7fd6" stroke-width="1.3"/><path d="M9,15 L13,11" stroke="#aaa"/></g>
<line x1="63.0" y1="832.5" x2="68.5" y2="832.5" stroke="#333" stroke-width="1" stroke-dasharray="1,1" shape-rendering="crispEdges"/>
<g transform="translate(54,841.0)"><rect x="6" y="1" width="4" height="4" fill="#4a8ad8"/><path d="M8,5 V8 M3,8 H13 M3,8 V10 M8,8 V10 M13,8 V10" stroke="#666" stroke-width="0.9"/><rect x="1" y="10.5" width="4" height="4" fill="#4cae4c"/><rect x="6" y="10.5" width="4" height="4" fill="#4cae4c"/><rect x="11" y="10.5" width="4" height="4" fill="#4cae4c"/></g>
<line x1="46.0" y1="850.5" x2="50.5" y2="850.5" stroke="#333" stroke-width="1" stroke-dasharray="1,1" shape-rendering="crispEdges"/>
<path d="M45.5,846.0 L45.5,852.5 L38.5,852.5 Z" fill="#333"/>
<g transform="translate(72,859.0)"><path d="M8,1 L15.5,8 L13.5,8 L13.5,14 L2.5,14 L2.5,8 L0.5,8 Z" fill="#f3e6d0" stroke="#c0773a"/><path d="M8,1 L15.5,8 L13,8 L8,3.5 L3,8 L0.5,8 Z" fill="#e88a3a"/><rect x="6" y="9.5" width="4" height="4.5" fill="#777"/><rect x="0" y="13.5" width="16" height="2.5" fill="#5fb04a"/></g>
<line x1="63.0" y1="868.5" x2="68.5" y2="868.5" stroke="#333" stroke-width="1" stroke-dasharray="1,1" shape-rendering="crispEdges"/>
<g transform="translate(72,877.0)"><rect x="2.5" y="1.5" width="11" height="14" fill="#fff" stroke="#9aa0a8"/><rect x="1.5" y="1.5" width="2.5" height="14" fill="#d8662c"/><path d="M6,5.5 H11 M6,8 H11" stroke="#4a7fd6" stroke-width="1.3"/><path d="M9,15 L13,11" stroke="#aaa"/></g>
<line x1="63.0" y1="886.5" x2="68.5" y2="886.5" stroke="#333" stroke-width="1" stroke-dasharray="1,1" shape-rendering="crispEdges"/>
<g transform="translate(72,895.0)"><rect x="2.5" y="1.5" width="11" height="14" fill="#fff" stroke="#9aa0a8"/><rect x="1.5" y="1.5" width="2.5" height="14" fill="#d8662c"/><path d="M6,5.5 H11 M6,8 H11" stroke="#4a7fd6" stroke-width="1.3"/><path d="M9,15 L13,11" stroke="#aaa"/></g>
<line x1="63.0" y1="904.5" x2="68.5" y2="904.5" stroke="#333" stroke-width="1" stroke-dasharray="1,1" shape-rendering="crispEdges"/>
<g transform="translate(72,913.0)"><rect x="2.5" y="1.5" width="11" height="14" fill="#fff" stroke="#9aa0a8"/><rect x="1.5" y="1.5" width="2.5" height="14" fill="#d8662c"/><path d="M6,5.5 H11 M6,8 H11" stroke="#4a7fd6" stroke-width="1.3"/><path d="M9,15 L13,11" stroke="#aaa"/></g>
<line x1="63.0" y1="922.5" x2="68.5" y2="922.5" stroke="#333" stroke-width="1" stroke-dasharray="1,1" shape-rendering="crispEdges"/>
<g transform="translate(72,931.0)"><rect x="2.5" y="1.5" width="11" height="14" fill="#fff" stroke="#9aa0a8"/><rect x="1.5" y="1.5" width="2.5" height="14" fill="#d8662c"/><path d="M6,5.5 H11 M6,8 H11" stroke="#4a7fd6" stroke-width="1.3"/><path d="M9,15 L13,11" stroke="#aaa"/></g>
<line x1="63.0" y1="940.5" x2="68.5" y2="940.5" stroke="#333" stroke-width="1" stroke-dasharray="1,1" shape-rendering="crispEdges"/>
<g transform="translate(72,949.0)"><rect x="2.5" y="1.5" width="11" height="14" fill="#fff" stroke="#9aa0a8"/><rect x="1.5" y="1.5" width="2.5" height="14" fill="#d8662c"/><path d="M6,5.5 H11 M6,8 H11" stroke="#4a7fd6" stroke-width="1.3"/><path d="M9,15 L13,11" stroke="#aaa"/></g>
<line x1="63.0" y1="958.5" x2="68.5" y2="958.5" stroke="#333" stroke-width="1" stroke-dasharray="1,1" shape-rendering="crispEdges"/>
<line x1="24.5" y1="246.5" x2="24.5" y2="328.5" stroke="#333" stroke-width="1" stroke-dasharray="1,1" shape-rendering="crispEdges"/>
<line x1="42.5" y1="336.5" x2="42.5" y2="850.5" stroke="#333" stroke-width="1" stroke-dasharray="1,1" shape-rendering="crispEdges"/>
<line x1="60.5" y1="390.5" x2="60.5" y2="832.5" stroke="#333" stroke-width="1" stroke-dasharray="1,1" shape-rendering="crispEdges"/>
<line x1="78.5" y1="444.5" x2="78.5" y2="544.5" stroke="#333" stroke-width="1" stroke-dasharray="1,1" shape-rendering="crispEdges"/>
<line x1="78.5" y1="588.5" x2="78.5" y2="688.5" stroke="#333" stroke-width="1" stroke-dasharray="1,1" shape-rendering="crispEdges"/>
<line x1="78.5" y1="714.5" x2="78.5" y2="742.5" stroke="#333" stroke-width="1" stroke-dasharray="1,1" shape-rendering="crispEdges"/>
<line x1="60.5" y1="858.5" x2="60.5" y2="958.5" stroke="#333" stroke-width="1" stroke-dasharray="1,1" shape-rendering="crispEdges"/>
</svg>
<div class="t" style="left:40px;top:229.0px">Strata</div>
<div class="t" style="left:55px;top:247.0px">Export Data</div>
<div class="t" style="left:55px;top:265.0px">Import Data</div>
<div class="t" style="left:55px;top:283.0px">Document Manager</div>
<div class="t" style="left:55px;top:301.0px">Strata Information</div>
<div class="t" style="left:55px;top:319.0px">UK National Grid</div>
<div class="t" style="left:73px;top:337.0px">Enter Readings</div>
<div class="t" style="left:73px;top:355.0px">Grid Overview</div>
<div class="t" style="left:73px;top:373.0px">Generation</div>
<div class="t" style="left:91px;top:391.0px">Site Homepage</div>
<div class="t" style="left:91px;top:409.0px">Fossil</div>
<div class="t" style="left:91px;top:427.0px">Interconnector</div>
<div class="t" style="left:109px;top:445.0px">Interconnector Report</div>
<div class="t" style="left:109px;top:463.0px">Dutch ICT</div>
<div class="t" style="left:109px;top:481.0px">E-W INT</div>
<div class="t" style="left:109px;top:499.0px">French ICT</div>
<div class="t" style="left:109px;top:517.0px">Irish ICT</div>
<div class="t" style="left:109px;top:535.0px">Total ICT Gen</div>
<div class="t" style="left:91px;top:553.0px">Nuclear</div>
<div class="t" style="left:91px;top:571.0px">Renewable</div>
<div class="t" style="left:109px;top:589.0px">Renewable Report</div>
<div class="t" style="left:109px;top:607.0px">Hydro</div>
<div class="t" style="left:109px;top:625.0px">Pumped</div>
<div class="t" style="left:109px;top:643.0px">Wind</div>
<div class="t" style="left:109px;top:661.0px">Renewable</div>
<div class="t" style="left:109px;top:679.0px">Wind &amp; Hydro</div>
<div class="t" style="left:91px;top:697.0px">Totals</div>
<div class="t" style="left:109px;top:715.0px">Totals Report</div>
<div class="t" style="left:109px;top:733.0px">Total Generation</div>
<div class="t" style="left:91px;top:751.0px">Fossil Generation Report</div>
<div class="t" style="left:91px;top:769.0px">Generation By Type</div>
<div class="t" style="left:91px;top:787.0px">Interconnector Report</div>
<div class="t" style="left:91px;top:805.0px">Renewable Report</div>
<div class="t" style="left:91px;top:823.0px">Total Generation Report</div>
<div class="t" style="left:73px;top:841.0px">Reports</div>
<div class="t" style="left:91px;top:859.0px">Site Homepage</div>
<div class="t" style="left:91px;top:877.0px">aaa</div>
<div class="t" style="left:91px;top:895.0px">Fossil Fuel Report</div>
<div class="t" style="left:91px;top:913.0px">Grid Report</div>
<div class="t" style="left:91px;top:931.0px">Nuclear Report</div>
<div class="t" style="left:91px;top:949.0px">Renewable Report</div>

<div id="main" class="a"></div>
<div id="tabs" class="a"></div>
<div id="tab" class="a"></div>
<div id="tabt" class="a">Generation By Type</div>
<div id="content" class="a"></div>
<div id="filt" class="a"></div>
<div class="fl" style="left:328px">Frequency</div>
<div class="sel" style="left:327px;width:81px">1 Day<b>&#9660;</b></div>
<div class="fl" style="left:417px">Trend Type</div>
<div class="sel" style="left:417px;width:110px">Consumption<b style="background:#fff;padding-left:3px">&#9660;</b></div>
<div class="fl" style="left:537px">View Type</div>
<div class="sel" style="left:537px;width:114px">Bar Chart<b>&#9660;</b></div>
<div class="fl" style="left:1171px">Timeframe</div>
<div class="sel" style="left:1171px;width:119px">Last 30 Days<b>&#9660;</b></div>
<div class="fl" style="left:1301px">From</div>
<div class="inp" style="left:1301px;width:125px">09/08/2015 00:00</div>
<div class="fl" style="left:1461px">To</div>
<div class="inp" style="left:1461px;width:125px">06/09/2015 00:00</div>
<svg class="a" style="left:1428px;top:251px" width="14" height="14"><rect x="0.5" y="0.5" width="12" height="12" fill="#fff" stroke="#8a9ab0"/><rect x="1" y="1" width="11" height="3" fill="#e8843a"/><path d="M3,6.5 H10 M3,9 H10 M5,5 V11 M8,5 V11" stroke="#6ab04a" stroke-width="1"/></svg>
<svg class="a" style="left:1588px;top:251px" width="14" height="14"><rect x="0.5" y="0.5" width="12" height="12" fill="#fff" stroke="#8a9ab0"/><rect x="1" y="1" width="11" height="3" fill="#e8843a"/><path d="M3,6.5 H10 M3,9 H10 M5,5 V11 M8,5 V11" stroke="#6ab04a" stroke-width="1"/></svg>
<svg class="a" style="left:1621px;top:253px" width="16" height="16"><circle cx="8" cy="8" r="6.5" fill="#4cb34c" stroke="#2d8a2d"/><path d="M4.5,8 L7,10.5 L11.5,5.5" stroke="#fff" stroke-width="1.8" fill="none"/></svg>
<div style="position:absolute;left:310px;top:153px;width:38px;height:25px;background:linear-gradient(#fbb040,#f39214);border:1px solid #d9801a;border-radius:4px"></div>
<svg class="a" style="left:316px;top:157px" width="28" height="18"><g transform="translate(6,8)"><circle r="3.1" fill="none" stroke="#fff" stroke-width="2.4"/><path d="M0,-5.2 V-3 M0,5.2 V3 M-5.2,0 H-3 M5.2,0 H3 M-3.7,-3.7 L-2.2,-2.2 M3.7,3.7 L2.2,2.2 M-3.7,3.7 L-2.2,2.2 M3.7,-3.7 L2.2,-2.2" stroke="#fff" stroke-width="2"/></g><path d="M19,1.5 L27,9 L24.5,9 L24.5,15 L21.5,15 L21.5,11 L16.5,11 L16.5,15 L13.5,15 L13.5,9 L11,9 Z" fill="#fff"/></svg>
<div style="position:absolute;left:353px;top:153px;width:38px;height:25px;background:linear-gradient(#fbb040,#f39214);border:1px solid #d9801a;border-radius:4px"></div>
<svg class="a" style="left:359px;top:157px" width="28" height="18"><g transform="translate(6,8)"><circle r="3.1" fill="none" stroke="#333" stroke-width="2.4"/><path d="M0,-5.2 V-3 M0,5.2 V3 M-5.2,0 H-3 M5.2,0 H3 M-3.7,-3.7 L-2.2,-2.2 M3.7,3.7 L2.2,2.2 M-3.7,3.7 L-2.2,2.2 M3.7,-3.7 L2.2,-2.2" stroke="#333" stroke-width="2"/></g><path d="M20,1.5 L22,6.5 L27,6.8 L23,10 L24.5,15 L20,12 L15.5,15 L17,10 L13,6.8 L18,6.5 Z" fill="#333"/></svg>
<div style="position:absolute;left:396px;top:153px;width:24px;height:25px;background:linear-gradient(#5cc2ea,#2a96cc);border:1.5px solid #111;border-radius:4px"></div>
<svg class="a" style="left:401px;top:158px" width="14" height="16"><path d="M2,1.5 L12,8 L2,14.5 Z" fill="#fff"/></svg>
<div style="position:absolute;left:424px;top:154px;white-space:nowrap;font-size:17px;font-weight:bold;color:#1a5f9e;letter-spacing:0.05px">National Grid</div>
<svg class="a" style="left:537px;top:157px" width="18" height="16"><path d="M0.5,2 L4,2 L9,8.5 L4,15 L0.5,15 L5.5,8.5 Z M7.5,2 L11,2 L16,8.5 L11,15 L7.5,15 L12.5,8.5 Z" fill="#3b82e6" stroke="#2a6ad0" stroke-width="0.6"/></svg>
<div style="position:absolute;left:558px;top:154px;white-space:nowrap;font-size:17px;font-weight:bold;color:#1a5f9e;letter-spacing:0.05px">UK National Grid</div>
<svg class="a" style="left:698px;top:157px" width="18" height="16"><path d="M0.5,2 L4,2 L9,8.5 L4,15 L0.5,15 L5.5,8.5 Z M7.5,2 L11,2 L16,8.5 L11,15 L7.5,15 L12.5,8.5 Z" fill="#3b82e6" stroke="#2a6ad0" stroke-width="0.6"/></svg>
<div style="position:absolute;left:720px;top:154px;white-space:nowrap;font-size:17px;font-weight:bold;color:#1a5f9e;letter-spacing:0.05px">Generation</div>
<svg class="a" style="left:815px;top:157px" width="18" height="16"><path d="M0.5,2 L4,2 L9,8.5 L4,15 L0.5,15 L5.5,8.5 Z M7.5,2 L11,2 L16,8.5 L11,15 L7.5,15 L12.5,8.5 Z" fill="#3b82e6" stroke="#2a6ad0" stroke-width="0.6"/></svg>
<div style="position:absolute;left:837px;top:154px;white-space:nowrap;font-size:17px;font-weight:bold;color:#1a5f9e;letter-spacing:0.05px">Generation By Type</div>
<div style="position:absolute;left:1415px;top:153px;width:112px;height:25px;background:linear-gradient(#5bc0de,#31a2c8);border:1px solid #2a8ab0;border-radius:4px"></div>
<svg class="a" style="left:1428px;top:158px" width="16" height="16"><circle cx="7.5" cy="8" r="5.5" fill="none" stroke="#fff" stroke-width="1.6"/><path d="M7.5,4.5 V10 M5,8 L7.5,10.5 L10,8" stroke="#fff" stroke-width="1.6" fill="none"/></svg>
<div style="position:absolute;left:1446px;top:157px;white-space:nowrap;font-size:14px;color:#fff;letter-spacing:0.15px">PDF / Print</div>
<div style="position:absolute;left:1529px;top:153px;width:76px;height:25px;background:linear-gradient(#fff,#e6e6e6);border:1px solid #c4c4c4;border-radius:4px"></div>
<svg class="a" style="left:1541px;top:159px" width="14" height="12"><rect x="0.5" y="1" width="13" height="10" fill="#222"/><path d="M0.5,1 L7,7 L13.5,1 M0.5,11 L5,6 M13.5,11 L9,6" stroke="#fff" stroke-width="1" fill="none"/></svg>
<div style="position:absolute;left:1558px;top:157px;white-space:nowrap;font-size:14px;color:#222;letter-spacing:0.1px">Email</div>
<div style="position:absolute;left:1606px;top:153px;width:67px;height:25px;background:linear-gradient(#62c462,#3aa33a);border:1px solid #2f8f2f;border-radius:4px"></div>
<svg class="a" style="left:1619px;top:159px" width="14" height="14"><g transform="translate(7,7)"><circle r="3.2" fill="none" stroke="#fff" stroke-width="2.4"/><path d="M0,-5.5 V-3 M0,5.5 V3 M-5.5,0 H-3 M5.5,0 H3 M-3.9,-3.9 L-2.2,-2.2 M3.9,3.9 L2.2,2.2 M-3.9,3.9 L-2.2,2.2 M3.9,-3.9 L2.2,-2.2" stroke="#fff" stroke-width="2.2"/></g></svg>
<div style="position:absolute;left:1635px;top:157px;white-space:nowrap;font-size:14px;color:#fff;letter-spacing:0.1px">Edit</div>

<svg class="a" style="left:0;top:0" width="1680" height="1050">
<rect x="372" y="339.0" width="1275" height="75.9" fill="#eeeeee"/>
<rect x="372" y="415.9" width="1275" height="75.9" fill="#ffffff"/>
<rect x="372" y="491.7" width="1275" height="75.9" fill="#eeeeee"/>
<rect x="372" y="567.6" width="1275" height="75.9" fill="#ffffff"/>
<rect x="372" y="643.4" width="1275" height="75.9" fill="#eeeeee"/>
<rect x="372" y="719.3" width="1275" height="75.9" fill="#ffffff"/>
<rect x="372" y="795.1" width="1275" height="75.9" fill="#eeeeee"/>
<rect x="393.6" y="340.0" width="82.2" height="75.9" fill="#e1e4e9"/>
<rect x="393.6" y="415.9" width="82.2" height="75.9" fill="#eef2f7"/>
<rect x="393.6" y="491.7" width="82.2" height="75.9" fill="#e1e4e9"/>
<rect x="393.6" y="567.6" width="82.2" height="75.9" fill="#eef2f7"/>
<rect x="393.6" y="643.4" width="82.2" height="75.9" fill="#e1e4e9"/>
<rect x="393.6" y="719.3" width="82.2" height="75.9" fill="#eef2f7"/>
<rect x="393.6" y="795.1" width="82.2" height="75.9" fill="#e1e4e9"/>
<rect x="681.3" y="340.0" width="82.2" height="75.9" fill="#e1e4e9"/>
<rect x="681.3" y="415.9" width="82.2" height="75.9" fill="#eef2f7"/>
<rect x="681.3" y="491.7" width="82.2" height="75.9" fill="#e1e4e9"/>
<rect x="681.3" y="567.6" width="82.2" height="75.9" fill="#eef2f7"/>
<rect x="681.3" y="643.4" width="82.2" height="75.9" fill="#e1e4e9"/>
<rect x="681.3" y="719.3" width="82.2" height="75.9" fill="#eef2f7"/>
<rect x="681.3" y="795.1" width="82.2" height="75.9" fill="#e1e4e9"/>
<rect x="969.1" y="340.0" width="82.2" height="75.9" fill="#e1e4e9"/>
<rect x="969.1" y="415.9" width="82.2" height="75.9" fill="#eef2f7"/>
<rect x="969.1" y="491.7" width="82.2" height="75.9" fill="#e1e4e9"/>
<rect x="969.1" y="567.6" width="82.2" height="75.9" fill="#eef2f7"/>
<rect x="969.1" y="643.4" width="82.2" height="75.9" fill="#e1e4e9"/>
<rect x="969.1" y="719.3" width="82.2" height="75.9" fill="#eef2f7"/>
<rect x="969.1" y="795.1" width="82.2" height="75.9" fill="#e1e4e9"/>
<rect x="1256.8" y="340.0" width="82.2" height="75.9" fill="#e1e4e9"/>
<rect x="1256.8" y="415.9" width="82.2" height="75.9" fill="#eef2f7"/>
<rect x="1256.8" y="491.7" width="82.2" height="75.9" fill="#e1e4e9"/>
<rect x="1256.8" y="567.6" width="82.2" height="75.9" fill="#eef2f7"/>
<rect x="1256.8" y="643.4" width="82.2" height="75.9" fill="#e1e4e9"/>
<rect x="1256.8" y="719.3" width="82.2" height="75.9" fill="#eef2f7"/>
<rect x="1256.8" y="795.1" width="82.2" height="75.9" fill="#e1e4e9"/>
<rect x="1544.6" y="340.0" width="82.2" height="75.9" fill="#e1e4e9"/>
<rect x="1544.6" y="415.9" width="82.2" height="75.9" fill="#eef2f7"/>
<rect x="1544.6" y="491.7" width="82.2" height="75.9" fill="#e1e4e9"/>
<rect x="1544.6" y="567.6" width="82.2" height="75.9" fill="#eef2f7"/>
<rect x="1544.6" y="643.4" width="82.2" height="75.9" fill="#e1e4e9"/>
<rect x="1544.6" y="719.3" width="82.2" height="75.9" fill="#eef2f7"/>
<rect x="1544.6" y="795.1" width="82.2" height="75.9" fill="#e1e4e9"/>
<line x1="393.5" y1="340" x2="393.5" y2="871" stroke="#d2d2d2" stroke-width="1"/>
<line x1="475.5" y1="340" x2="475.5" y2="871" stroke="#d2d2d2" stroke-width="1"/>
<line x1="558.5" y1="340" x2="558.5" y2="871" stroke="#d2d2d2" stroke-width="1"/>
<line x1="640.5" y1="340" x2="640.5" y2="871" stroke="#d2d2d2" stroke-width="1"/>
<line x1="722.5" y1="340" x2="722.5" y2="871" stroke="#d2d2d2" stroke-width="1"/>
<line x1="804.5" y1="340" x2="804.5" y2="871" stroke="#d2d2d2" stroke-width="1"/>
<line x1="886.5" y1="340" x2="886.5" y2="871" stroke="#d2d2d2" stroke-width="1"/>
<line x1="969.5" y1="340" x2="969.5" y2="871" stroke="#d2d2d2" stroke-width="1"/>
<line x1="1051.5" y1="340" x2="1051.5" y2="871" stroke="#d2d2d2" stroke-width="1"/>
<line x1="1133.5" y1="340" x2="1133.5" y2="871" stroke="#d2d2d2" stroke-width="1"/>
<line x1="1215.5" y1="340" x2="1215.5" y2="871" stroke="#d2d2d2" stroke-width="1"/>
<line x1="1297.5" y1="340" x2="1297.5" y2="871" stroke="#d2d2d2" stroke-width="1"/>
<line x1="1380.5" y1="340" x2="1380.5" y2="871" stroke="#d2d2d2" stroke-width="1"/>
<line x1="1462.5" y1="340" x2="1462.5" y2="871" stroke="#d2d2d2" stroke-width="1"/>
<line x1="1544.5" y1="340" x2="1544.5" y2="871" stroke="#d2d2d2" stroke-width="1"/>
<line x1="1626.5" y1="340" x2="1626.5" y2="871" stroke="#d2d2d2" stroke-width="1"/>
<line x1="373" y1="339.5" x2="1648" y2="339.5" stroke="#c4c7cc" stroke-width="1"/>
<line x1="373" y1="416.5" x2="1648" y2="416.5" stroke="#c4c7cc" stroke-width="1"/>
<line x1="373" y1="492.5" x2="1648" y2="492.5" stroke="#c4c7cc" stroke-width="1"/>
<line x1="373" y1="568.5" x2="1648" y2="568.5" stroke="#c4c7cc" stroke-width="1"/>
<line x1="373" y1="643.5" x2="1648" y2="643.5" stroke="#c4c7cc" stroke-width="1"/>
<line x1="373" y1="719.5" x2="1648" y2="719.5" stroke="#c4c7cc" stroke-width="1"/>
<line x1="373" y1="795.5" x2="1648" y2="795.5" stroke="#c4c7cc" stroke-width="1"/>
<line x1="373" y1="871.5" x2="1648" y2="871.5" stroke="#c4c7cc" stroke-width="1"/>
<line x1="393.5" y1="340" x2="393.5" y2="871" stroke="#7d9cc4" stroke-width="1" stroke-dasharray="4,3"/>
<line x1="475.5" y1="340" x2="475.5" y2="871" stroke="#7d9cc4" stroke-width="1" stroke-dasharray="4,3"/>
<line x1="681.5" y1="340" x2="681.5" y2="871" stroke="#7d9cc4" stroke-width="1" stroke-dasharray="4,3"/>
<line x1="763.5" y1="340" x2="763.5" y2="871" stroke="#7d9cc4" stroke-width="1" stroke-dasharray="4,3"/>
<line x1="969.5" y1="340" x2="969.5" y2="871" stroke="#7d9cc4" stroke-width="1" stroke-dasharray="4,3"/>
<line x1="1051.5" y1="340" x2="1051.5" y2="871" stroke="#7d9cc4" stroke-width="1" stroke-dasharray="4,3"/>
<line x1="1256.5" y1="340" x2="1256.5" y2="871" stroke="#7d9cc4" stroke-width="1" stroke-dasharray="4,3"/>
<line x1="1339.5" y1="340" x2="1339.5" y2="871" stroke="#7d9cc4" stroke-width="1" stroke-dasharray="4,3"/>
<line x1="1544.5" y1="340" x2="1544.5" y2="871" stroke="#7d9cc4" stroke-width="1" stroke-dasharray="4,3"/>
<line x1="1626.5" y1="340" x2="1626.5" y2="871" stroke="#7d9cc4" stroke-width="1" stroke-dasharray="4,3"/>
<rect x="372.5" y="339.5" width="1275.5" height="531.5" fill="none" stroke="#c0c0c0"/>
<defs><clipPath id="plotclip"><rect x="373" y="340" width="1275" height="531"/></clipPath></defs><g clip-path="url(#plotclip)">
<rect x="420.5" y="508.0" width="30" height="363.0" fill="#ffffff"/>
<rect x="420.0" y="507.0" width="31" height="3.2" rx="2" ry="2" fill="#b374b5"/>
<rect x="420.0" y="510.8" width="31" height="15.1" rx="2" ry="2" fill="#dcd03c"/>
<rect x="420.0" y="526.5" width="31" height="29.6" rx="2" ry="2" fill="#f05a55"/>
<rect x="420.0" y="556.7" width="31" height="31.4" rx="2" ry="2" fill="#2b7bb9"/>
<rect x="420.0" y="588.7" width="31" height="78.5" rx="2" ry="2" fill="#f98b0b"/>
<rect x="420.0" y="667.8" width="31" height="101.8" rx="2" ry="2" fill="#46a54b"/>
<rect x="420.0" y="770.2" width="31" height="104.8" rx="2" ry="2" fill="#e94b8f"/>
<rect x="461.6" y="447.6" width="30" height="423.4" fill="#ffffff"/>
<rect x="461.1" y="446.6" width="31" height="3.9" rx="2" ry="2" fill="#b374b5"/>
<rect x="461.1" y="451.1" width="31" height="15.8" rx="2" ry="2" fill="#dcd03c"/>
<rect x="461.1" y="467.5" width="31" height="14.5" rx="2" ry="2" fill="#f05a55"/>
<rect x="461.1" y="482.6" width="31" height="36.5" rx="2" ry="2" fill="#2b7bb9"/>
<rect x="461.1" y="519.7" width="31" height="93.1" rx="2" ry="2" fill="#f98b0b"/>
<rect x="461.1" y="613.4" width="31" height="102.2" rx="2" ry="2" fill="#46a54b"/>
<rect x="461.1" y="716.2" width="31" height="158.8" rx="2" ry="2" fill="#e94b8f"/>
<rect x="502.7" y="423.9" width="30" height="447.1" fill="#ffffff"/>
<rect x="502.2" y="422.9" width="31" height="4.7" rx="2" ry="2" fill="#b374b5"/>
<rect x="502.2" y="428.2" width="31" height="14.5" rx="2" ry="2" fill="#dcd03c"/>
<rect x="502.2" y="443.3" width="31" height="29.1" rx="2" ry="2" fill="#f05a55"/>
<rect x="502.2" y="473.0" width="31" height="10.9" rx="2" ry="2" fill="#2b7bb9"/>
<rect x="502.2" y="484.5" width="31" height="100.4" rx="2" ry="2" fill="#f98b0b"/>
<rect x="502.2" y="585.5" width="31" height="100.9" rx="2" ry="2" fill="#46a54b"/>
<rect x="502.2" y="687.0" width="31" height="188.0" rx="2" ry="2" fill="#e94b8f"/>
<rect x="543.8" y="426.1" width="30" height="444.9" fill="#ffffff"/>
<rect x="543.3" y="425.1" width="31" height="3.0" rx="2" ry="2" fill="#b374b5"/>
<rect x="543.3" y="428.7" width="31" height="14.0" rx="2" ry="2" fill="#dcd03c"/>
<rect x="543.3" y="443.3" width="31" height="30.5" rx="2" ry="2" fill="#f05a55"/>
<rect x="543.3" y="474.4" width="31" height="13.1" rx="2" ry="2" fill="#2b7bb9"/>
<rect x="543.3" y="488.1" width="31" height="111.4" rx="2" ry="2" fill="#f98b0b"/>
<rect x="543.3" y="600.1" width="31" height="100.0" rx="2" ry="2" fill="#46a54b"/>
<rect x="543.3" y="700.7" width="31" height="174.3" rx="2" ry="2" fill="#e94b8f"/>
<rect x="584.9" y="421.1" width="30" height="449.9" fill="#ffffff"/>
<rect x="584.4" y="420.1" width="31" height="4.8" rx="2" ry="2" fill="#b374b5"/>
<rect x="584.4" y="425.5" width="31" height="14.5" rx="2" ry="2" fill="#dcd03c"/>
<rect x="584.4" y="440.6" width="31" height="30.5" rx="2" ry="2" fill="#f05a55"/>
<rect x="584.4" y="471.7" width="31" height="21.3" rx="2" ry="2" fill="#2b7bb9"/>
<rect x="584.4" y="493.6" width="31" height="102.3" rx="2" ry="2" fill="#f98b0b"/>
<rect x="584.4" y="596.5" width="31" height="99.0" rx="2" ry="2" fill="#46a54b"/>
<rect x="584.4" y="696.1" width="31" height="178.9" rx="2" ry="2" fill="#e94b8f"/>
<rect x="626.0" y="427.1" width="30" height="443.9" fill="#ffffff"/>
<rect x="625.5" y="426.1" width="31" height="7.0" rx="2" ry="2" fill="#b374b5"/>
<rect x="625.5" y="433.7" width="31" height="14.0" rx="2" ry="2" fill="#dcd03c"/>
<rect x="625.5" y="448.3" width="31" height="29.6" rx="2" ry="2" fill="#f05a55"/>
<rect x="625.5" y="478.5" width="31" height="12.2" rx="2" ry="2" fill="#2b7bb9"/>
<rect x="625.5" y="491.3" width="31" height="91.8" rx="2" ry="2" fill="#f98b0b"/>
<rect x="625.5" y="583.7" width="31" height="100.8" rx="2" ry="2" fill="#46a54b"/>
<rect x="625.5" y="685.1" width="31" height="189.9" rx="2" ry="2" fill="#e94b8f"/>
<rect x="667.1" y="502.0" width="30" height="369.0" fill="#ffffff"/>
<rect x="666.6" y="501.0" width="31" height="3.0" rx="2" ry="2" fill="#b374b5"/>
<rect x="666.6" y="504.6" width="31" height="14.5" rx="2" ry="2" fill="#dcd03c"/>
<rect x="666.6" y="519.7" width="31" height="30.4" rx="2" ry="2" fill="#f05a55"/>
<rect x="666.6" y="550.7" width="31" height="14.1" rx="2" ry="2" fill="#2b7bb9"/>
<rect x="666.6" y="565.4" width="31" height="66.6" rx="2" ry="2" fill="#f98b0b"/>
<rect x="666.6" y="632.6" width="31" height="103.1" rx="2" ry="2" fill="#46a54b"/>
<rect x="666.6" y="736.3" width="31" height="138.7" rx="2" ry="2" fill="#e94b8f"/>
<rect x="708.2" y="499.7" width="30" height="371.3" fill="#ffffff"/>
<rect x="707.7" y="498.7" width="31" height="3.4" rx="2" ry="2" fill="#b374b5"/>
<rect x="707.7" y="502.7" width="31" height="14.1" rx="2" ry="2" fill="#dcd03c"/>
<rect x="707.7" y="517.4" width="31" height="29.5" rx="2" ry="2" fill="#f05a55"/>
<rect x="707.7" y="547.5" width="31" height="3.6" rx="2" ry="2" fill="#2b7bb9"/>
<rect x="707.7" y="551.7" width="31" height="85.3" rx="2" ry="2" fill="#f98b0b"/>
<rect x="707.7" y="637.6" width="31" height="102.3" rx="2" ry="2" fill="#46a54b"/>
<rect x="707.7" y="740.5" width="31" height="134.5" rx="2" ry="2" fill="#e94b8f"/>
<rect x="749.4" y="433.9" width="30" height="437.1" fill="#ffffff"/>
<rect x="748.9" y="432.9" width="31" height="3.9" rx="2" ry="2" fill="#b374b5"/>
<rect x="748.9" y="437.4" width="31" height="14.5" rx="2" ry="2" fill="#dcd03c"/>
<rect x="748.9" y="452.5" width="31" height="30.4" rx="2" ry="2" fill="#f05a55"/>
<rect x="748.9" y="483.5" width="31" height="6.3" rx="2" ry="2" fill="#2b7bb9"/>
<rect x="748.9" y="490.4" width="31" height="105.5" rx="2" ry="2" fill="#f98b0b"/>
<rect x="748.9" y="596.5" width="31" height="96.3" rx="2" ry="2" fill="#46a54b"/>
<rect x="748.9" y="693.4" width="31" height="181.6" rx="2" ry="2" fill="#e94b8f"/>
<rect x="790.5" y="429.8" width="30" height="441.2" fill="#ffffff"/>
<rect x="790.0" y="428.8" width="31" height="4.3" rx="2" ry="2" fill="#b374b5"/>
<rect x="790.0" y="433.7" width="31" height="14.0" rx="2" ry="2" fill="#dcd03c"/>
<rect x="790.0" y="448.3" width="31" height="29.6" rx="2" ry="2" fill="#f05a55"/>
<rect x="790.0" y="478.5" width="31" height="27.3" rx="2" ry="2" fill="#2b7bb9"/>
<rect x="790.0" y="506.4" width="31" height="89.5" rx="2" ry="2" fill="#f98b0b"/>
<rect x="790.0" y="596.5" width="31" height="95.4" rx="2" ry="2" fill="#46a54b"/>
<rect x="790.0" y="692.5" width="31" height="182.5" rx="2" ry="2" fill="#e94b8f"/>
<rect x="831.6" y="428.9" width="30" height="442.1" fill="#ffffff"/>
<rect x="831.1" y="427.9" width="31" height="4.3" rx="2" ry="2" fill="#b374b5"/>
<rect x="831.1" y="432.8" width="31" height="14.0" rx="2" ry="2" fill="#dcd03c"/>
<rect x="831.1" y="447.4" width="31" height="29.6" rx="2" ry="2" fill="#f05a55"/>
<rect x="831.1" y="477.6" width="31" height="30.5" rx="2" ry="2" fill="#2b7bb9"/>
<rect x="831.1" y="508.7" width="31" height="90.8" rx="2" ry="2" fill="#f98b0b"/>
<rect x="831.1" y="600.1" width="31" height="95.9" rx="2" ry="2" fill="#46a54b"/>
<rect x="831.1" y="696.6" width="31" height="178.4" rx="2" ry="2" fill="#e94b8f"/>
<rect x="872.7" y="424.8" width="30" height="446.2" fill="#ffffff"/>
<rect x="872.2" y="423.8" width="31" height="4.3" rx="2" ry="2" fill="#b374b5"/>
<rect x="872.2" y="428.7" width="31" height="14.5" rx="2" ry="2" fill="#dcd03c"/>
<rect x="872.2" y="443.8" width="31" height="30.0" rx="2" ry="2" fill="#f05a55"/>
<rect x="872.2" y="474.4" width="31" height="30.5" rx="2" ry="2" fill="#2b7bb9"/>
<rect x="872.2" y="505.5" width="31" height="97.2" rx="2" ry="2" fill="#f98b0b"/>
<rect x="872.2" y="603.3" width="31" height="95.4" rx="2" ry="2" fill="#46a54b"/>
<rect x="872.2" y="699.3" width="31" height="175.7" rx="2" ry="2" fill="#e94b8f"/>
<rect x="913.8" y="440.8" width="30" height="430.2" fill="#ffffff"/>
<rect x="913.3" y="439.8" width="31" height="4.3" rx="2" ry="2" fill="#b374b5"/>
<rect x="913.3" y="444.7" width="31" height="14.0" rx="2" ry="2" fill="#dcd03c"/>
<rect x="913.3" y="459.3" width="31" height="30.5" rx="2" ry="2" fill="#f05a55"/>
<rect x="913.3" y="490.4" width="31" height="43.3" rx="2" ry="2" fill="#2b7bb9"/>
<rect x="913.3" y="534.3" width="31" height="66.6" rx="2" ry="2" fill="#f98b0b"/>
<rect x="913.3" y="601.5" width="31" height="97.2" rx="2" ry="2" fill="#46a54b"/>
<rect x="913.3" y="699.3" width="31" height="175.7" rx="2" ry="2" fill="#e94b8f"/>
<rect x="954.9" y="479.2" width="30" height="391.8" fill="#ffffff"/>
<rect x="954.4" y="478.2" width="31" height="3.8" rx="2" ry="2" fill="#b374b5"/>
<rect x="954.4" y="482.6" width="31" height="15.0" rx="2" ry="2" fill="#dcd03c"/>
<rect x="954.4" y="498.2" width="31" height="29.5" rx="2" ry="2" fill="#f05a55"/>
<rect x="954.4" y="528.3" width="31" height="20.5" rx="2" ry="2" fill="#2b7bb9"/>
<rect x="954.4" y="549.4" width="31" height="76.2" rx="2" ry="2" fill="#f98b0b"/>
<rect x="954.4" y="626.2" width="31" height="101.3" rx="2" ry="2" fill="#46a54b"/>
<rect x="954.4" y="728.1" width="31" height="146.9" rx="2" ry="2" fill="#e94b8f"/>
<rect x="996.0" y="506.1" width="30" height="364.9" fill="#ffffff"/>
<rect x="995.5" y="505.1" width="31" height="3.4" rx="2" ry="2" fill="#b374b5"/>
<rect x="995.5" y="509.1" width="31" height="13.6" rx="2" ry="2" fill="#dcd03c"/>
<rect x="995.5" y="523.3" width="31" height="30.5" rx="2" ry="2" fill="#f05a55"/>
<rect x="995.5" y="554.4" width="31" height="55.6" rx="2" ry="2" fill="#2b7bb9"/>
<rect x="995.5" y="610.6" width="31" height="48.3" rx="2" ry="2" fill="#f98b0b"/>
<rect x="995.5" y="659.5" width="31" height="106.0" rx="2" ry="2" fill="#46a54b"/>
<rect x="995.5" y="766.1" width="31" height="108.9" rx="2" ry="2" fill="#e94b8f"/>
<rect x="1037.1" y="421.6" width="30" height="449.4" fill="#ffffff"/>
<rect x="1036.6" y="420.6" width="31" height="4.3" rx="2" ry="2" fill="#b374b5"/>
<rect x="1036.6" y="425.5" width="31" height="14.5" rx="2" ry="2" fill="#dcd03c"/>
<rect x="1036.6" y="440.6" width="31" height="29.5" rx="2" ry="2" fill="#f05a55"/>
<rect x="1036.6" y="470.7" width="31" height="19.6" rx="2" ry="2" fill="#2b7bb9"/>
<rect x="1036.6" y="490.9" width="31" height="89.0" rx="2" ry="2" fill="#f98b0b"/>
<rect x="1036.6" y="580.5" width="31" height="111.4" rx="2" ry="2" fill="#46a54b"/>
<rect x="1036.6" y="692.5" width="31" height="182.5" rx="2" ry="2" fill="#e94b8f"/>
<rect x="1078.2" y="437.6" width="30" height="433.4" fill="#ffffff"/>
<rect x="1077.7" y="436.6" width="31" height="3.8" rx="2" ry="2" fill="#b374b5"/>
<rect x="1077.7" y="441.0" width="31" height="14.1" rx="2" ry="2" fill="#dcd03c"/>
<rect x="1077.7" y="455.7" width="31" height="30.0" rx="2" ry="2" fill="#f05a55"/>
<rect x="1077.7" y="486.3" width="31" height="39.6" rx="2" ry="2" fill="#2b7bb9"/>
<rect x="1077.7" y="526.5" width="31" height="81.7" rx="2" ry="2" fill="#f98b0b"/>
<rect x="1077.7" y="608.8" width="31" height="113.2" rx="2" ry="2" fill="#46a54b"/>
<rect x="1077.7" y="722.6" width="31" height="152.4" rx="2" ry="2" fill="#e94b8f"/>
<rect x="1119.3" y="446.7" width="30" height="424.3" fill="#ffffff"/>
<rect x="1118.8" y="445.7" width="31" height="4.3" rx="2" ry="2" fill="#b374b5"/>
<rect x="1118.8" y="450.6" width="31" height="14.5" rx="2" ry="2" fill="#dcd03c"/>
<rect x="1118.8" y="465.7" width="31" height="30.0" rx="2" ry="2" fill="#f05a55"/>
<rect x="1118.8" y="496.3" width="31" height="56.6" rx="2" ry="2" fill="#2b7bb9"/>
<rect x="1118.8" y="553.5" width="31" height="66.6" rx="2" ry="2" fill="#f98b0b"/>
<rect x="1118.8" y="620.7" width="31" height="112.3" rx="2" ry="2" fill="#46a54b"/>
<rect x="1118.8" y="733.6" width="31" height="141.4" rx="2" ry="2" fill="#e94b8f"/>
<rect x="1160.4" y="446.7" width="30" height="424.3" fill="#ffffff"/>
<rect x="1159.9" y="445.7" width="31" height="4.8" rx="2" ry="2" fill="#b374b5"/>
<rect x="1159.9" y="451.1" width="31" height="14.9" rx="2" ry="2" fill="#dcd03c"/>
<rect x="1159.9" y="466.6" width="31" height="30.1" rx="2" ry="2" fill="#f05a55"/>
<rect x="1159.9" y="497.3" width="31" height="57.0" rx="2" ry="2" fill="#2b7bb9"/>
<rect x="1159.9" y="554.9" width="31" height="73.9" rx="2" ry="2" fill="#f98b0b"/>
<rect x="1159.9" y="629.4" width="31" height="113.7" rx="2" ry="2" fill="#46a54b"/>
<rect x="1159.9" y="743.7" width="31" height="131.3" rx="2" ry="2" fill="#e94b8f"/>
<rect x="1201.5" y="465.0" width="30" height="406.0" fill="#ffffff"/>
<rect x="1201.0" y="464.0" width="31" height="4.8" rx="2" ry="2" fill="#b374b5"/>
<rect x="1201.0" y="469.4" width="31" height="14.5" rx="2" ry="2" fill="#dcd03c"/>
<rect x="1201.0" y="484.5" width="31" height="29.1" rx="2" ry="2" fill="#f05a55"/>
<rect x="1201.0" y="514.2" width="31" height="45.5" rx="2" ry="2" fill="#2b7bb9"/>
<rect x="1201.0" y="560.3" width="31" height="64.4" rx="2" ry="2" fill="#f98b0b"/>
<rect x="1201.0" y="625.3" width="31" height="113.6" rx="2" ry="2" fill="#46a54b"/>
<rect x="1201.0" y="739.5" width="31" height="135.5" rx="2" ry="2" fill="#e94b8f"/>
<rect x="1242.6" y="496.1" width="30" height="374.9" fill="#ffffff"/>
<rect x="1242.1" y="495.1" width="31" height="2.9" rx="2" ry="2" fill="#b374b5"/>
<rect x="1242.1" y="498.6" width="31" height="14.5" rx="2" ry="2" fill="#dcd03c"/>
<rect x="1242.1" y="513.7" width="31" height="30.0" rx="2" ry="2" fill="#f05a55"/>
<rect x="1242.1" y="544.3" width="31" height="37.4" rx="2" ry="2" fill="#2b7bb9"/>
<rect x="1242.1" y="582.3" width="31" height="57.4" rx="2" ry="2" fill="#f98b0b"/>
<rect x="1242.1" y="640.3" width="31" height="112.4" rx="2" ry="2" fill="#46a54b"/>
<rect x="1242.1" y="753.3" width="31" height="121.7" rx="2" ry="2" fill="#e94b8f"/>
<rect x="1283.7" y="494.3" width="30" height="376.7" fill="#ffffff"/>
<rect x="1283.2" y="493.3" width="31" height="3.8" rx="2" ry="2" fill="#b374b5"/>
<rect x="1283.2" y="497.7" width="31" height="14.0" rx="2" ry="2" fill="#dcd03c"/>
<rect x="1283.2" y="512.3" width="31" height="29.6" rx="2" ry="2" fill="#f05a55"/>
<rect x="1283.2" y="542.5" width="31" height="18.2" rx="2" ry="2" fill="#2b7bb9"/>
<rect x="1283.2" y="561.3" width="31" height="58.8" rx="2" ry="2" fill="#f98b0b"/>
<rect x="1283.2" y="620.7" width="31" height="112.3" rx="2" ry="2" fill="#46a54b"/>
<rect x="1283.2" y="733.6" width="31" height="141.4" rx="2" ry="2" fill="#e94b8f"/>
<rect x="1324.9" y="466.4" width="30" height="404.6" fill="#ffffff"/>
<rect x="1324.4" y="465.4" width="31" height="3.8" rx="2" ry="2" fill="#b374b5"/>
<rect x="1324.4" y="469.8" width="31" height="14.1" rx="2" ry="2" fill="#dcd03c"/>
<rect x="1324.4" y="484.5" width="31" height="29.5" rx="2" ry="2" fill="#f05a55"/>
<rect x="1324.4" y="514.6" width="31" height="20.5" rx="2" ry="2" fill="#2b7bb9"/>
<rect x="1324.4" y="535.7" width="31" height="74.3" rx="2" ry="2" fill="#f98b0b"/>
<rect x="1324.4" y="610.6" width="31" height="110.1" rx="2" ry="2" fill="#46a54b"/>
<rect x="1324.4" y="721.3" width="31" height="153.7" rx="2" ry="2" fill="#e94b8f"/>
<rect x="1366.0" y="425.2" width="30" height="445.8" fill="#ffffff"/>
<rect x="1365.5" y="424.2" width="31" height="4.3" rx="2" ry="2" fill="#b374b5"/>
<rect x="1365.5" y="429.1" width="31" height="14.5" rx="2" ry="2" fill="#dcd03c"/>
<rect x="1365.5" y="444.2" width="31" height="29.1" rx="2" ry="2" fill="#f05a55"/>
<rect x="1365.5" y="473.9" width="31" height="20.9" rx="2" ry="2" fill="#2b7bb9"/>
<rect x="1365.5" y="495.4" width="31" height="86.3" rx="2" ry="2" fill="#f98b0b"/>
<rect x="1365.5" y="582.3" width="31" height="100.4" rx="2" ry="2" fill="#46a54b"/>
<rect x="1365.5" y="683.3" width="31" height="191.7" rx="2" ry="2" fill="#e94b8f"/>
<rect x="1407.1" y="421.1" width="30" height="449.9" fill="#ffffff"/>
<rect x="1406.6" y="420.1" width="31" height="3.9" rx="2" ry="2" fill="#b374b5"/>
<rect x="1406.6" y="424.6" width="31" height="14.5" rx="2" ry="2" fill="#dcd03c"/>
<rect x="1406.6" y="439.7" width="31" height="29.1" rx="2" ry="2" fill="#f05a55"/>
<rect x="1406.6" y="469.4" width="31" height="20.4" rx="2" ry="2" fill="#2b7bb9"/>
<rect x="1406.6" y="490.4" width="31" height="76.7" rx="2" ry="2" fill="#f98b0b"/>
<rect x="1406.6" y="567.7" width="31" height="105.4" rx="2" ry="2" fill="#46a54b"/>
<rect x="1406.6" y="673.7" width="31" height="201.3" rx="2" ry="2" fill="#e94b8f"/>
<rect x="1448.2" y="421.1" width="30" height="449.9" fill="#ffffff"/>
<rect x="1447.7" y="420.1" width="31" height="4.8" rx="2" ry="2" fill="#b374b5"/>
<rect x="1447.7" y="425.5" width="31" height="14.5" rx="2" ry="2" fill="#dcd03c"/>
<rect x="1447.7" y="440.6" width="31" height="29.5" rx="2" ry="2" fill="#f05a55"/>
<rect x="1447.7" y="470.7" width="31" height="36.0" rx="2" ry="2" fill="#2b7bb9"/>
<rect x="1447.7" y="507.3" width="31" height="75.8" rx="2" ry="2" fill="#f98b0b"/>
<rect x="1447.7" y="583.7" width="31" height="105.4" rx="2" ry="2" fill="#46a54b"/>
<rect x="1447.7" y="689.7" width="31" height="185.3" rx="2" ry="2" fill="#e94b8f"/>
<rect x="1489.3" y="430.3" width="30" height="440.7" fill="#ffffff"/>
<rect x="1488.8" y="429.3" width="31" height="4.3" rx="2" ry="2" fill="#b374b5"/>
<rect x="1488.8" y="434.2" width="31" height="14.5" rx="2" ry="2" fill="#dcd03c"/>
<rect x="1488.8" y="449.3" width="31" height="30.4" rx="2" ry="2" fill="#f05a55"/>
<rect x="1488.8" y="480.3" width="31" height="42.4" rx="2" ry="2" fill="#2b7bb9"/>
<rect x="1488.8" y="523.3" width="31" height="70.7" rx="2" ry="2" fill="#f98b0b"/>
<rect x="1488.8" y="594.6" width="31" height="103.2" rx="2" ry="2" fill="#46a54b"/>
<rect x="1488.8" y="698.4" width="31" height="176.6" rx="2" ry="2" fill="#e94b8f"/>
<rect x="1530.4" y="480.1" width="30" height="390.9" fill="#ffffff"/>
<rect x="1529.9" y="479.1" width="31" height="4.8" rx="2" ry="2" fill="#b374b5"/>
<rect x="1529.9" y="484.5" width="31" height="14.4" rx="2" ry="2" fill="#dcd03c"/>
<rect x="1529.9" y="499.5" width="31" height="30.5" rx="2" ry="2" fill="#f05a55"/>
<rect x="1529.9" y="530.6" width="31" height="38.3" rx="2" ry="2" fill="#2b7bb9"/>
<rect x="1529.9" y="569.5" width="31" height="63.8" rx="2" ry="2" fill="#f98b0b"/>
<rect x="1529.9" y="633.9" width="31" height="105.0" rx="2" ry="2" fill="#46a54b"/>
<rect x="1529.9" y="739.5" width="31" height="135.5" rx="2" ry="2" fill="#e94b8f"/>
</g>
<line x1="373" y1="871.5" x2="1648" y2="871.5" stroke="#c0c0c0" stroke-width="1"/>
<line x1="393.5" y1="871" x2="393.5" y2="881" stroke="#222" stroke-width="1"/>
<line x1="475.5" y1="871" x2="475.5" y2="881" stroke="#222" stroke-width="1"/>
<line x1="558.5" y1="871" x2="558.5" y2="881" stroke="#222" stroke-width="1"/>
<line x1="640.5" y1="871" x2="640.5" y2="881" stroke="#222" stroke-width="1"/>
<line x1="722.5" y1="871" x2="722.5" y2="881" stroke="#222" stroke-width="1"/>
<line x1="804.5" y1="871" x2="804.5" y2="881" stroke="#222" stroke-width="1"/>
<line x1="886.5" y1="871" x2="886.5" y2="881" stroke="#222" stroke-width="1"/>
<line x1="969.5" y1="871" x2="969.5" y2="881" stroke="#222" stroke-width="1"/>
<line x1="1051.5" y1="871" x2="1051.5" y2="881" stroke="#222" stroke-width="1"/>
<line x1="1133.5" y1="871" x2="1133.5" y2="881" stroke="#222" stroke-width="1"/>
<line x1="1215.5" y1="871" x2="1215.5" y2="881" stroke="#222" stroke-width="1"/>
<line x1="1297.5" y1="871" x2="1297.5" y2="881" stroke="#222" stroke-width="1"/>
<line x1="1380.5" y1="871" x2="1380.5" y2="881" stroke="#222" stroke-width="1"/>
<line x1="1462.5" y1="871" x2="1462.5" y2="881" stroke="#222" stroke-width="1"/>
<line x1="1544.5" y1="871" x2="1544.5" y2="881" stroke="#222" stroke-width="1"/>
<line x1="1626.5" y1="871" x2="1626.5" y2="881" stroke="#222" stroke-width="1"/>
</svg>
<div class="xl" style="left:353.6px">8. Aug</div>
<div class="xl" style="left:435.8px">10. Aug</div>
<div class="xl" style="left:518.0px">12. Aug</div>
<div class="xl" style="left:600.2px">14. Aug</div>
<div class="xl" style="left:682.5px">16. Aug</div>
<div class="xl" style="left:764.7px">18. Aug</div>
<div class="xl" style="left:846.9px">20. Aug</div>
<div class="xl" style="left:929.1px">22. Aug</div>
<div class="xl" style="left:1011.3px">24. Aug</div>
<div class="xl" style="left:1093.5px">26. Aug</div>
<div class="xl" style="left:1175.7px">28. Aug</div>
<div class="xl" style="left:1258.0px">30. Aug</div>
<div class="xl" style="left:1340.2px">1. Sep</div>
<div class="xl" style="left:1422.4px">3. Sep</div>
<div class="xl" style="left:1504.6px">5. Sep</div>
<div class="xl" style="left:1586.8px">7. Sep</div>
<div class="yl" style="top:866.0px">0</div>
<div class="yl" style="top:790.1px">5</div>
<div class="yl" style="top:714.3px">10</div>
<div class="yl" style="top:638.4px">15</div>
<div class="yl" style="top:562.6px">20</div>
<div class="yl" style="top:486.7px">25</div>
<div class="yl" style="top:410.9px">30</div>
<div class="yl" style="top:335.0px">35</div>
<div class="lgs" style="left:518px;background:#e94b8f"></div><div class="lgt" style="left:539px">CCGT</div>
<div class="lgs" style="left:591px;background:#46a54b"></div><div class="lgt" style="left:612px">Nuclear</div>
<div class="lgs" style="left:676px;background:#f98b0b"></div><div class="lgt" style="left:697px">Coal</div>
<div class="lgs" style="left:743px;background:#2b7bb9"></div><div class="lgt" style="left:764px">Wind</div>
<div class="lgs" style="left:813px;background:#f05a55"></div><div class="lgt" style="left:834px">French ICT</div>
<div class="lgs" style="left:915px;background:#dcd03c"></div><div class="lgt" style="left:936px">Dutch ICT</div>
<div class="lgs" style="left:1013px;background:#b374b5"></div><div class="lgt" style="left:1034px">Pumped</div>
<div class="lgs" style="left:1101px;background:#fff200"></div><div class="lgt" style="left:1122px">Hydro</div>
<div class="lgs" style="left:1178px;background:#f07cb0"></div><div class="lgt" style="left:1199px">Irish ICT</div>
<div class="lgs" style="left:1264px;background:#5cbf68"></div><div class="lgt" style="left:1285px">E-W INT</div>
<div class="lgs" style="left:1349px;background:#fba33c"></div><div class="lgt" style="left:1370px">OCGT</div>
<div class="lgs" style="left:1423px;background:#416ea8"></div><div class="lgt" style="left:1444px">Oil</div>
<div style="position:absolute;left:832px;top:290px;white-space:nowrap;font-size:17px;color:#222;letter-spacing:0.75px">09/08/2015 00:00 - 06/09/2015 00:00</div>
<div style="position:absolute;left:927px;top:314px;white-space:nowrap;font-size:12px;color:#666;letter-spacing:0.6px">1 Point = 1.00 Days</div>
<div style="position:absolute;left:322px;top:599px;white-space:nowrap;font-size:12px;color:#333;transform:rotate(-90deg);transform-origin:50% 50%">gW</div>
<svg class="a" style="left:1628px;top:296px" width="18" height="16"><rect x="0" y="1" width="17" height="2.6" fill="#555"/><rect x="0" y="6" width="17" height="2.6" fill="#555"/><rect x="0" y="11" width="17" height="2.6" fill="#555"/></svg>
<svg class="a" style="left:0;top:900px" width="1680" height="100">
<rect x="387" y="48" width="978" height="20" fill="#f5f7fb"/><rect x="1370" y="48" width="259" height="20" fill="#f5f7fb"/>
<line x1="373" y1="28.5" x2="1648" y2="28.5" stroke="#555" stroke-width="1"/>
<line x1="387" y1="48" x2="1365" y2="48" stroke="#a3b8d6" stroke-width="2" stroke-dasharray="4,0.7"/>
<line x1="1370" y1="48" x2="1629" y2="48" stroke="#a3b8d6" stroke-width="2" stroke-dasharray="4,0.7"/>
<rect x="1606" y="29" width="23" height="39" fill="#cfe0f4" fill-opacity="0.8"/>
<line x1="1606.5" y1="29" x2="1606.5" y2="68" stroke="#666"/><line x1="1628.5" y1="29" x2="1628.5" y2="68" stroke="#666"/>
<rect x="1602.5" y="40.5" width="7" height="15" fill="#fff" stroke="#555"/><path d="M1605,44 V52 M1607,44 V52" stroke="#555" stroke-width="1" shape-rendering="crispEdges"/>
<rect x="1625.5" y="40.5" width="7" height="15" fill="#fff" stroke="#555"/><path d="M1628,44 V52 M1630,44 V52" stroke="#555" stroke-width="1" shape-rendering="crispEdges"/>
<rect x="373" y="68.5" width="1275" height="14" fill="url(#sbg)"/>
<defs><linearGradient id="sbg" x1="0" y1="0" x2="0" y2="1"><stop offset="0" stop-color="#e6e6e6"/><stop offset="1" stop-color="#fafafa"/></linearGradient><linearGradient id="sbb" x1="0" y1="0" x2="0" y2="1"><stop offset="0" stop-color="#fff"/><stop offset="1" stop-color="#ddd"/></linearGradient></defs>
<line x1="373" y1="68.5" x2="1648" y2="68.5" stroke="#bbb"/><line x1="373" y1="82.5" x2="1648" y2="82.5" stroke="#ccc"/>
<rect x="373.5" y="68.5" width="13" height="14" fill="url(#sbb)" stroke="#666"/><path d="M381.5,72.5 L378,75.5 L381.5,78.5 Z" fill="#555"/>
<rect x="1633.5" y="68.5" width="14" height="14" fill="url(#sbb)" stroke="#666"/><path d="M1639,72.5 L1642.5,75.5 L1639,78.5 Z" fill="#555"/>
<rect x="1606.5" y="68.5" width="22" height="14" fill="url(#sbb)" stroke="#666"/><path d="M1614.5,72 V79 M1617.5,72 V79 M1620.5,72 V79" stroke="#222" stroke-width="1"/>
</svg>
<div class="nvline" style="left:415px"></div><div class="nvl" style="left:417px">Jul '11</div>
<div class="nvline" style="left:561px"></div><div class="nvl" style="left:563px">Jan '12</div>
<div class="nvline" style="left:705px"></div><div class="nvl" style="left:707px">Jul '12</div>
<div class="nvline" style="left:851px"></div><div class="nvl" style="left:853px">Jan '13</div>
<div class="nvline" style="left:995px"></div><div class="nvl" style="left:997px">Jul '13</div>
<div class="nvline" style="left:1141px"></div><div class="nvl" style="left:1143px">Jan '14</div>
<div class="nvline" style="left:1285px"></div><div class="nvl" style="left:1287px">Jul '14</div>
<div class="nvline" style="left:1431px"></div><div class="nvl" style="left:1433px">Jan '15</div>
<div class="nvline" style="left:1575px"></div><div class="nvl" style="left:1577px">Jul '15</div>
</body></html>
